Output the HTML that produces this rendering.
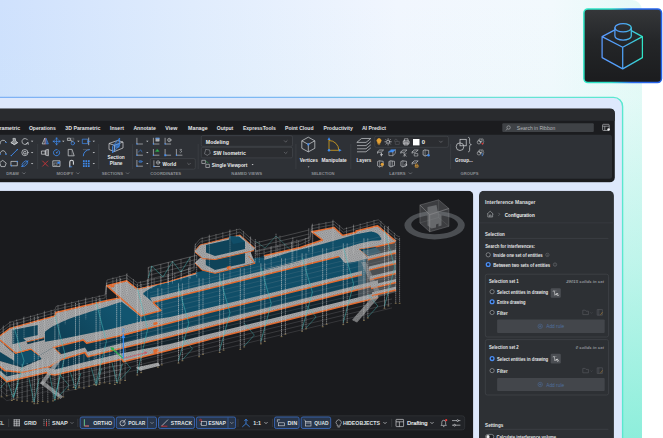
<!DOCTYPE html>
<html lang="en"><head><meta charset="utf-8"><title>Interference Manager</title>
<style>html,body{margin:0;padding:0;background:#ffffff;}body{width:663px;height:438px;overflow:hidden;}svg{display:block;}text{font-family:"Liberation Sans", sans-serif;}</style>
</head><body>
<svg width="663" height="438" viewBox="0 0 663 438" font-family='"Liberation Sans", sans-serif'>
<defs>
<linearGradient id="bgA" x1="0" y1="0" x2="1" y2="0">
 <stop offset="0" stop-color="#cfe1fd"/><stop offset="0.3" stop-color="#e0ecfd"/><stop offset="0.62" stop-color="#f1f6fe"/><stop offset="0.86" stop-color="#f2f9fd"/><stop offset="1" stop-color="#e5faf7"/>
</linearGradient>
<linearGradient id="bgB" x1="0" y1="0" x2="0" y2="1">
 <stop offset="0" stop-color="#84edd8" stop-opacity="0"/><stop offset="0.22" stop-color="#84edd8" stop-opacity="0.03"/><stop offset="0.6" stop-color="#84edd8" stop-opacity="0.4"/><stop offset="1" stop-color="#84edd8" stop-opacity="0.9"/>
</linearGradient>
<linearGradient id="frameB" x1="0" y1="0" x2="1" y2="0">
 <stop offset="0" stop-color="#7fb1f5"/><stop offset="0.5" stop-color="#7dbaf2"/><stop offset="0.8" stop-color="#6ae2d6"/><stop offset="1" stop-color="#5ae8cf"/>
</linearGradient>
<linearGradient id="icoB" x1="0" y1="0" x2="1" y2="0">
 <stop offset="0" stop-color="#2de6c6"/><stop offset="0.35" stop-color="#2de0c8"/><stop offset="0.62" stop-color="#2a6cf0"/><stop offset="1" stop-color="#2563eb"/>
</linearGradient>
<linearGradient id="icoF" x1="0" y1="0" x2="0" y2="1">
 <stop offset="0" stop-color="#35373a"/><stop offset="0.45" stop-color="#242628"/><stop offset="1" stop-color="#1b1c1e"/>
</linearGradient>
<linearGradient id="icoS" gradientUnits="userSpaceOnUse" x1="602" y1="0" x2="643" y2="0">
 <stop offset="0" stop-color="#5a9bff"/><stop offset="0.5" stop-color="#4fa2f8"/><stop offset="1" stop-color="#2fe6c4"/>
</linearGradient>
</defs>
<path d="M0 0 H632 A10 10 0 0 1 642 10 V438 H0 Z" fill="url(#bgA)"/>
<path d="M0 0 H632 A10 10 0 0 1 642 10 V438 H0 Z" fill="url(#bgB)"/>
<rect x="-20" y="97.4" width="642.6" height="400" rx="9" fill="#dde8fc" stroke="url(#frameB)" stroke-width="1.4"/>
<rect x="583.9" y="8.9" width="77.6" height="73.7" rx="4" fill="url(#icoF)" stroke="url(#icoB)" stroke-width="1.5"/>
<g fill="none" stroke="url(#icoS)" stroke-width="1.25" stroke-linejoin="round" stroke-linecap="round">
<path d="M602.1 36.6 L622.7 47.3 L642.4 36.6 M622.7 47.3 V68.9 M602.1 36.6 V57.6 L622.7 68.9 L642.4 57.6 V36.6 M602.1 36.6 L614.9 29.9 M642.4 36.6 L631.3 30.6"/>
<ellipse cx="623.1" cy="27.8" rx="8.2" ry="4.1"/>
<path d="M614.9 27.8 V36 A8.2 4.1 0 0 0 631.3 36 V27.8"/>
</g>
<clipPath id="cRib"><rect x="-20" y="108.4" width="634.8" height="74" rx="5"/></clipPath>
<g clip-path="url(#cRib)">
<rect x="-20.00" y="108.40" width="640.00" height="74.00" rx="0" fill="#1b1c1f" />
<rect x="-20.00" y="108.40" width="640.00" height="12.40" rx="0" fill="#292b2e" />
<rect x="-20.00" y="134.70" width="632.00" height="44.00" rx="2.5" fill="#2e3136" />
</g>
<text x="-6.90" y="129.53" font-size="5.3" font-weight="bold" fill="#e2e3e5"  textLength="27.00" lengthAdjust="spacingAndGlyphs" >Parametric</text>
<text x="28.90" y="129.53" font-size="5.3" font-weight="bold" fill="#e2e3e5"  textLength="26.90" lengthAdjust="spacingAndGlyphs" >Operations</text>
<text x="65.30" y="129.53" font-size="5.3" font-weight="bold" fill="#e2e3e5"  textLength="35.20" lengthAdjust="spacingAndGlyphs" >3D Parametric</text>
<text x="110.00" y="129.53" font-size="5.3" font-weight="bold" fill="#e2e3e5"  textLength="13.90" lengthAdjust="spacingAndGlyphs" >Insert</text>
<text x="133.40" y="129.53" font-size="5.3" font-weight="bold" fill="#e2e3e5"  textLength="22.40" lengthAdjust="spacingAndGlyphs" >Annotate</text>
<text x="165.30" y="129.53" font-size="5.3" font-weight="bold" fill="#e2e3e5"  textLength="12.00" lengthAdjust="spacingAndGlyphs" >View</text>
<text x="188.10" y="129.53" font-size="5.3" font-weight="bold" fill="#e2e3e5"  textLength="19.60" lengthAdjust="spacingAndGlyphs" >Manage</text>
<text x="216.80" y="129.53" font-size="5.3" font-weight="bold" fill="#e2e3e5"  textLength="16.50" lengthAdjust="spacingAndGlyphs" >Output</text>
<text x="242.90" y="129.53" font-size="5.3" font-weight="bold" fill="#e2e3e5"  textLength="32.90" lengthAdjust="spacingAndGlyphs" >ExpressTools</text>
<text x="285.10" y="129.53" font-size="5.3" font-weight="bold" fill="#e2e3e5"  textLength="28.40" lengthAdjust="spacingAndGlyphs" >Point Cloud</text>
<text x="323.50" y="129.53" font-size="5.3" font-weight="bold" fill="#e2e3e5"  textLength="29.40" lengthAdjust="spacingAndGlyphs" >Productivity</text>
<text x="361.90" y="129.53" font-size="5.3" font-weight="bold" fill="#e2e3e5"  textLength="24.10" lengthAdjust="spacingAndGlyphs" >AI Predict</text>
<rect x="502.30" y="123.30" width="91.50" height="8.80" rx="1" fill="#3f4246" />
<circle cx="508.6" cy="127.5" r="1.7" fill="none" stroke="#b4b7bb" stroke-width="0.6"/>
<line x1="507.40" y1="128.80" x2="506.00" y2="130.40" stroke="#b4b7bb" stroke-width="0.6" />
<text x="516.80" y="129.76" font-size="4.9" font-weight="normal" fill="#b3b6ba"  textLength="38.50" lengthAdjust="spacingAndGlyphs" >Search in Ribbon</text>
<g fill="none" stroke="#c9cbce" stroke-width="0.6"><rect x="602.6" y="124.3" width="6.6" height="6.2" rx="0.8"/><path d="M602.6 126.2 H609.2 M604.8 126.2 V130.5"/></g>
<circle cx="608.6" cy="129.5" r="1.3" fill="#e8e9ea"/>
<text x="6.30" y="175.12" font-size="3.9" font-weight="bold" fill="#8b8e93"  textLength="12.50" lengthAdjust="spacingAndGlyphs" >DRAW</text>
<path d="M22.60 172.75 L23.90 174.05 L25.20 172.75" fill="none" stroke="#8b8e93" stroke-width="0.6" stroke-linecap="round" stroke-linejoin="round"/>
<text x="56.50" y="175.12" font-size="3.9" font-weight="bold" fill="#8b8e93"  textLength="16.90" lengthAdjust="spacingAndGlyphs" >MODIFY</text>
<path d="M76.60 172.75 L77.90 174.05 L79.20 172.75" fill="none" stroke="#8b8e93" stroke-width="0.6" stroke-linecap="round" stroke-linejoin="round"/>
<text x="101.80" y="175.12" font-size="3.9" font-weight="bold" fill="#8b8e93"  textLength="21.30" lengthAdjust="spacingAndGlyphs" >SECTIONS</text>
<path d="M126.30 172.75 L127.60 174.05 L128.90 172.75" fill="none" stroke="#8b8e93" stroke-width="0.6" stroke-linecap="round" stroke-linejoin="round"/>
<text x="150.30" y="175.12" font-size="3.9" font-weight="bold" fill="#8b8e93"  textLength="30.80" lengthAdjust="spacingAndGlyphs" >COORDINATES</text>
<text x="231.30" y="175.12" font-size="3.9" font-weight="bold" fill="#8b8e93"  textLength="30.90" lengthAdjust="spacingAndGlyphs" >NAMED VIEWS</text>
<text x="311.20" y="175.12" font-size="3.9" font-weight="bold" fill="#8b8e93"  textLength="23.30" lengthAdjust="spacingAndGlyphs" >SELECTION</text>
<text x="389.30" y="175.12" font-size="3.9" font-weight="bold" fill="#8b8e93"  textLength="16.30" lengthAdjust="spacingAndGlyphs" >LAYERS</text>
<path d="M409.10 172.75 L410.40 174.05 L411.70 172.75" fill="none" stroke="#8b8e93" stroke-width="0.6" stroke-linecap="round" stroke-linejoin="round"/>
<text x="460.60" y="175.12" font-size="3.9" font-weight="bold" fill="#8b8e93"  textLength="17.90" lengthAdjust="spacingAndGlyphs" >GROUPS</text>
<line x1="37.70" y1="144.00" x2="37.70" y2="169.00" stroke="#41444a" stroke-width="0.6" />
<line x1="98.70" y1="144.00" x2="98.70" y2="169.00" stroke="#41444a" stroke-width="0.6" />
<line x1="132.40" y1="144.00" x2="132.40" y2="169.00" stroke="#41444a" stroke-width="0.6" />
<line x1="198.20" y1="144.00" x2="198.20" y2="169.00" stroke="#41444a" stroke-width="0.6" />
<line x1="295.90" y1="144.00" x2="295.90" y2="169.00" stroke="#41444a" stroke-width="0.6" />
<line x1="350.80" y1="144.00" x2="350.80" y2="169.00" stroke="#41444a" stroke-width="0.6" />
<line x1="450.60" y1="144.00" x2="450.60" y2="169.00" stroke="#41444a" stroke-width="0.6" />
<g transform="translate(3.00 141.40)" fill="none" stroke="#d6d8db" stroke-width="0.7" stroke-linecap="round" stroke-linejoin="round"><path d="M-3 2.5 A3.2 3.2 0 0 1 3 0.5"/><circle cx="3" cy="1" r="0.7" fill="#3f8cf0" stroke="none"/></g>
<g transform="translate(14.30 141.40)" fill="none" stroke="#d6d8db" stroke-width="0.7" stroke-linecap="round" stroke-linejoin="round"><path d="M-1 -3 L1 -3 L1.3 -0.5 L3.3 1.2 L0 3.2 L-3.3 1.2 L-1.3 -0.5 Z" fill="#d6d8db" fill-opacity="0.55"/><path d="M-3.3 1.2 L0 3.2 L3.3 1.2"/></g>
<g transform="translate(24.90 141.40)" fill="none" stroke="#d6d8db" stroke-width="0.7" stroke-linecap="round" stroke-linejoin="round"><path d="M2.6 -1.6 A3 3 0 1 0 2.9 1.2"/><path d="M1.2 2.6 L3.2 1.0 L3.4 3" stroke="#d6d8db"/></g>
<polygon points="30.9,140.8 33.3,140.8 32.1,142.1" fill="#c8cacd" stroke="none" stroke-width="1" />
<g transform="translate(3.00 152.60)" fill="none" stroke="#d6d8db" stroke-width="0.7" stroke-linecap="round" stroke-linejoin="round"><path d="M-3 1 C-2 -3 2 -3 3 1"/><circle cx="-3" cy="1.6" r="0.8" fill="#3f8cf0" stroke="none"/><circle cx="3" cy="1.6" r="0.8" fill="#3f8cf0" stroke="none"/></g>
<g transform="translate(14.30 152.60)" fill="none" stroke="#d6d8db" stroke-width="0.7" stroke-linecap="round" stroke-linejoin="round"><path d="M-3 3 L3 -3" stroke="#3f8cf0" stroke-width="0.9"/><circle cx="-3" cy="3" r="0.7" fill="#3f8cf0" stroke="none"/><circle cx="3" cy="-3" r="0.7" fill="#3f8cf0" stroke="none"/></g>
<g transform="translate(24.90 152.60)" fill="none" stroke="#d6d8db" stroke-width="0.7" stroke-linecap="round" stroke-linejoin="round"><circle r="3.1"/><path d="M1.2 -0.8 A1.5 1.5 0 1 0 1.4 0.6 H0"/></g>
<polygon points="30.9,152.0 33.3,152.0 32.1,153.3" fill="#c8cacd" stroke="none" stroke-width="1" />
<g transform="translate(3.00 163.60)" fill="none" stroke="#d6d8db" stroke-width="0.7" stroke-linecap="round" stroke-linejoin="round"><path d="M0 -3 L3.2 -0.6 L2 3 L-2 3 L-3.2 -0.6 Z"/></g>
<g transform="translate(14.30 163.60)" fill="none" stroke="#d6d8db" stroke-width="0.7" stroke-linecap="round" stroke-linejoin="round"><rect x="-3" y="-2.2" width="6" height="4.4"/><circle cx="3" cy="-2.2" r="0.7" fill="#3f8cf0" stroke="none"/><circle cx="-3" cy="2.2" r="0.7" fill="#3f8cf0" stroke="none"/></g>
<g transform="translate(24.90 163.60)" fill="none" stroke="#d6d8db" stroke-width="0.7" stroke-linecap="round" stroke-linejoin="round"><ellipse rx="3.4" ry="2" transform="rotate(-45)" stroke="#3f8cf0"/><path d="M-3 3 L3 -3" stroke="#3f8cf0"/><circle cx="-2.8" cy="2.8" r="0.7" fill="#3f8cf0" stroke="none"/></g>
<polygon points="30.9,163.0 33.3,163.0 32.1,164.3" fill="#c8cacd" stroke="none" stroke-width="1" />
<g transform="translate(45.20 141.40)" fill="none" stroke="#d6d8db" stroke-width="0.7" stroke-linecap="round" stroke-linejoin="round"><path d="M-0.5 -3 L-3 2.5 L-0.5 2.5 Z" stroke="#d6d8db"/><path d="M0.8 -3 L3.2 2.5 L0.8 2.5 Z" stroke="#3f8cf0" fill="#3f8cf0" fill-opacity="0.4"/><path d="M0.2 -3.6 V3.4" stroke="#d05050" stroke-width="0.4"/></g>
<g transform="translate(56.60 141.40)" fill="none" stroke="#d6d8db" stroke-width="0.7" stroke-linecap="round" stroke-linejoin="round"><path d="M-3.4 0 H3.4 M0 -3.4 V3.4 M-3.4 0 L-2.2 -1 M-3.4 0 L-2.2 1 M3.4 0 L2.2 -1 M3.4 0 L2.2 1 M0 -3.4 L-1 -2.2 M0 -3.4 L1 -2.2 M0 3.4 L-1 2.2 M0 3.4 L1 2.2" stroke="#3f8cf0"/></g>
<polygon points="62.1,140.8 64.5,140.8 63.3,142.1" fill="#c8cacd" stroke="none" stroke-width="1" />
<g transform="translate(71.20 141.40)" fill="none" stroke="#d6d8db" stroke-width="0.7" stroke-linecap="round" stroke-linejoin="round"><rect x="-3.4" y="-3.2" width="2.6" height="2.2" /><circle cx="1.6" cy="1.8" r="1.7" stroke="#3f8cf0"/><path d="M-0.4 -1.2 L1 0.4" stroke="#d6d8db"/><rect x="0" y="-3.2" width="2.6" height="2" stroke="#8f9297" stroke-width="0.4"/></g>
<polygon points="77.2,140.8 79.6,140.8 78.4,142.1" fill="#c8cacd" stroke="none" stroke-width="1" />
<g transform="translate(86.30 141.40)" fill="none" stroke="#d6d8db" stroke-width="0.7" stroke-linecap="round" stroke-linejoin="round"><rect x="-3.6" y="-2.2" width="5" height="4.4" stroke="#3f8cf0"/><path d="M2.4 -3.4 V3.4"/><path d="M1.4 0 H3.8" stroke="#3f8cf0"/></g>
<polygon points="92.6,140.8 95.0,140.8 93.8,142.1" fill="#c8cacd" stroke="none" stroke-width="1" />
<g transform="translate(45.20 152.60)" fill="none" stroke="#d6d8db" stroke-width="0.7" stroke-linecap="round" stroke-linejoin="round"><rect x="-3.4" y="-1.6" width="3.4" height="3.2"/><path d="M0.6 -2.6 L3.2 -3.2 V3.2 L0.6 2.6 Z" fill="#d6d8db" fill-opacity="0.35"/></g>
<g transform="translate(56.60 152.60)" fill="none" stroke="#d6d8db" stroke-width="0.7" stroke-linecap="round" stroke-linejoin="round"><path d="M2.9 -1 A3.1 3.1 0 1 1 0.5 -3" stroke="#3f8cf0" stroke-width="0.85"/><path d="M0.4 -0.2 L2.2 -2.2" stroke="#3f8cf0"/><circle cx="0.2" cy="0.2" r="0.8" fill="#3f8cf0" stroke="none"/></g>
<g transform="translate(71.20 152.60)" fill="none" stroke="#d6d8db" stroke-width="0.7" stroke-linecap="round" stroke-linejoin="round"><path d="M-2.6 -3.2 H0.8 L3 3.2 H-2.6 Z"/><path d="M0.8 -3.2 V3.2" stroke="#8f9297" stroke-width="0.5"/></g>
<g transform="translate(86.30 152.60)" fill="none" stroke="#d6d8db" stroke-width="0.7" stroke-linecap="round" stroke-linejoin="round"><path d="M-3 3.2 A6.2 6.2 0 0 1 3.2 -3" stroke="#3f8cf0" stroke-width="0.9"/><path d="M-3 -3 H3.2" stroke="#8f9297" stroke-width="0.4" stroke-dasharray="0.8 0.8"/></g>
<polygon points="92.6,152.0 95.0,152.0 93.8,153.3" fill="#c8cacd" stroke="none" stroke-width="1" />
<g transform="translate(45.20 163.60)" fill="none" stroke="#d6d8db" stroke-width="0.7" stroke-linecap="round" stroke-linejoin="round"><path d="M-2.6 -2.6 L2.6 2.6 M2.6 -2.6 L-2.6 2.6" stroke="#d8353a" stroke-width="0.8"/></g>
<g transform="translate(56.60 163.60)" fill="none" stroke="#d6d8db" stroke-width="0.7" stroke-linecap="round" stroke-linejoin="round"><rect x="-3.4" y="-2.8" width="6.8" height="5.6"/><rect x="-2.2" y="-0.6" width="2.6" height="2.4" stroke="#8f9297"/><rect x="1.4" y="-1.6" width="1.6" height="1.4" stroke="#3f8cf0" fill="#3f8cf0"/></g>
<g transform="translate(71.20 163.60)" fill="none" stroke="#d6d8db" stroke-width="0.7" stroke-linecap="round" stroke-linejoin="round"><path d="M-1.4 3.2 V-1.6 A1.8 1.8 0 0 1 2.2 -1.6 V0.6" stroke-width="1.1"/><path d="M-1.4 3.2 H0.6" stroke="#3f8cf0"/></g>
<g transform="translate(86.30 163.60)" fill="none" stroke="#d6d8db" stroke-width="0.7" stroke-linecap="round" stroke-linejoin="round"><rect x="-3.35" y="-3.35" width="1.7" height="1.7" fill="#3f8cf0" stroke="none"/><rect x="-3.35" y="-0.85" width="1.7" height="1.7" fill="#3f8cf0" stroke="none"/><rect x="-3.35" y="1.65" width="1.7" height="1.7" fill="#3f8cf0" stroke="none"/><rect x="-0.85" y="-3.35" width="1.7" height="1.7" fill="#3f8cf0" stroke="none"/><rect x="-0.85" y="-0.85" width="1.7" height="1.7" fill="#3f8cf0" stroke="none"/><rect x="-0.85" y="1.65" width="1.7" height="1.7" fill="#3f8cf0" stroke="none"/><rect x="1.65" y="-3.35" width="1.7" height="1.7" fill="#3f8cf0" stroke="none"/><rect x="1.65" y="-0.85" width="1.7" height="1.7" fill="#3f8cf0" stroke="none"/><rect x="1.65" y="1.65" width="1.7" height="1.7" fill="#3f8cf0" stroke="none"/></g>
<polygon points="92.6,163.0 95.0,163.0 93.8,164.3" fill="#c8cacd" stroke="none" stroke-width="1" />
<g fill="none" stroke-linejoin="round" stroke-width="0.7"><path d="M109 143.5 L117.5 140.5 L123 142 L123 148 L114.5 151.5 L109 149.5 Z M109 143.5 L114.5 145.3 L123 142 M114.5 145.3 V151.5" stroke="#d6d8db"/><path d="M112.5 146.5 L119.6 138 V145.5 L112.5 153 Z" stroke="#3f8cf0" fill="#3f8cf0" fill-opacity="0.25" stroke-width="0.8"/><rect x="115.6" y="144.3" width="3.6" height="3" fill="#3f8cf0" fill-opacity="0.55" stroke="#3f8cf0" stroke-width="0.5"/></g>
<text x="107.50" y="159.39" font-size="5.2" font-weight="bold" fill="#e8e9eb"  textLength="17.30" lengthAdjust="spacingAndGlyphs" >Section</text>
<text x="109.80" y="164.79" font-size="5.2" font-weight="bold" fill="#e8e9eb"  textLength="12.60" lengthAdjust="spacingAndGlyphs" >Plane</text>
<g transform="translate(139.50 141.40)" fill="none" stroke="#d6d8db" stroke-width="0.6" stroke-linecap="round" stroke-linejoin="round"><path d="M-2.6 -3.2 V2.6 H3"/><circle cx="-2.6" cy="2.6" r="0.7" fill="#3f8cf0" stroke="none"/></g>
<polygon points="146.1,140.8 148.5,140.8 147.3,142.1" fill="#c8cacd" stroke="none" stroke-width="1" />
<g transform="translate(156.00 141.40)" fill="none" stroke="#d6d8db" stroke-width="0.6" stroke-linecap="round" stroke-linejoin="round"><path d="M-2.6 -3.2 V2.6 H3"/><circle cx="-2.6" cy="2.6" r="0.7" fill="#3f8cf0" stroke="none"/><rect x="0" y="-3.2" width="3.2" height="3" fill="#d6d8db" fill-opacity="0.7" stroke-width="0.4"/><path d="M0 -3.2 H3.2" stroke="#3f8cf0" stroke-width="0.8"/></g>
<g transform="translate(167.70 141.40)" fill="none" stroke="#d6d8db" stroke-width="0.6" stroke-linecap="round" stroke-linejoin="round"><path d="M-2.6 -3.2 V2.6 H3"/><circle cx="-2.6" cy="2.6" r="0.7" fill="#3f8cf0" stroke="none"/><circle cx="1.6" cy="-1.4" r="1.7" stroke-width="0.5"/><path d="M0 -1.4 H3.2 M1.6 -3 V0.2" stroke-width="0.3"/></g>
<g transform="translate(139.50 152.60)" fill="none" stroke="#d6d8db" stroke-width="0.6" stroke-linecap="round" stroke-linejoin="round"><path d="M-2.6 -3.2 V2.6 H3"/><circle cx="-2.6" cy="2.6" r="0.7" fill="#3f8cf0" stroke="none"/><path d="M-1.4 -0.4 L1.4 -2.8 L2.4 -0.6" stroke="#3f8cf0" stroke-width="0.5"/></g>
<polygon points="146.1,152.0 148.5,152.0 147.3,153.3" fill="#c8cacd" stroke="none" stroke-width="1" />
<g transform="translate(156.00 152.60)" fill="none" stroke="#d6d8db" stroke-width="0.6" stroke-linecap="round" stroke-linejoin="round"><path d="M-2.6 -3.2 V2.6 H3"/><circle cx="-2.6" cy="2.6" r="0.7" fill="#3f8cf0" stroke="none"/><path d="M-0.6 -1 L3.2 -1 L1.4 -3.4 Z" fill="#2db84d" stroke="#2db84d" stroke-width="0.3"/></g>
<g transform="translate(167.70 152.60)" fill="none" stroke="#d6d8db" stroke-width="0.6" stroke-linecap="round" stroke-linejoin="round"><path d="M-2.6 -3.2 V2.6 H3"/><rect x="-3.4" y="1.8" width="2" height="1.8" fill="#3f8cf0" stroke="none"/></g>
<g transform="translate(179.00 152.60)" fill="none" stroke="#d6d8db" stroke-width="0.6" stroke-linecap="round" stroke-linejoin="round"><path d="M-2.6 -3.2 V2.6 H3"/><circle cx="-2.6" cy="2.6" r="0.7" fill="#3f8cf0" stroke="none"/><path d="M1 -3.2 H2.6 L1.6 -2 A1 1 0 1 1 0.8 -0.4" stroke-width="0.45"/></g>
<g transform="translate(139.50 163.60)" fill="none" stroke="#d6d8db" stroke-width="0.6" stroke-linecap="round" stroke-linejoin="round"><path d="M-2.6 -3.2 V2.6 H3"/><circle cx="-2.6" cy="2.6" r="0.7" fill="#3f8cf0" stroke="none"/><ellipse cx="1" cy="-2" rx="1.8" ry="1" stroke="#3f8cf0" fill="#3f8cf0" fill-opacity="0.5" stroke-width="0.4"/></g>
<polygon points="146.1,163.0 148.5,163.0 147.3,164.3" fill="#c8cacd" stroke="none" stroke-width="1" />
<rect x="150.30" y="158.60" width="45.00" height="10.60" rx="1.5" fill="#2b2d31" stroke="#484b50" stroke-width="0.6"/>
<g transform="translate(156.50 163.90)" fill="none" stroke="#d6d8db" stroke-width="0.6" stroke-linecap="round" stroke-linejoin="round"><path d="M-2.6 -3.2 V2.6 H3"/><circle cx="-2.6" cy="2.6" r="0.7" fill="#3f8cf0" stroke="none"/><circle cx="1.6" cy="-1.4" r="1.7" stroke-width="0.5"/><path d="M0 -1.4 H3.2 M1.6 -3 V0.2" stroke-width="0.3"/></g>
<text x="162.60" y="166.29" font-size="5.2" font-weight="bold" fill="#ecedee"  textLength="13.50" lengthAdjust="spacingAndGlyphs" >World</text>
<path d="M187.60 163.30 L189.00 164.70 L190.40 163.30" fill="none" stroke="#7d8085" stroke-width="0.6" stroke-linecap="round" stroke-linejoin="round"/>
<rect x="201.30" y="135.70" width="91.20" height="10.60" rx="1.5" fill="#2b2d31" stroke="#484b50" stroke-width="0.6"/>
<text x="205.80" y="143.93" font-size="5.3" font-weight="bold" fill="#ecedee"  textLength="23.10" lengthAdjust="spacingAndGlyphs" >Modeling</text>
<path d="M284.30 140.70 L285.70 142.10 L287.10 140.70" fill="none" stroke="#7d8085" stroke-width="0.6" stroke-linecap="round" stroke-linejoin="round"/>
<rect x="201.30" y="147.30" width="91.20" height="10.60" rx="1.5" fill="#2b2d31" stroke="#484b50" stroke-width="0.6"/>
<g transform="translate(207.30 152.40)" fill="none" stroke="#d6d8db" stroke-width="0.6" stroke-linecap="round" stroke-linejoin="round"><path d="M-1.5 -3 L2.2 -2.4 L3 1 L0 3 L-2.8 1.4 Z" stroke="#8f9297" stroke-dasharray="1.2 0.7"/></g>
<text x="213.30" y="155.23" font-size="5.3" font-weight="bold" fill="#ecedee"  textLength="32.50" lengthAdjust="spacingAndGlyphs" >SW Isometric</text>
<path d="M284.30 152.20 L285.70 153.60 L287.10 152.20" fill="none" stroke="#7d8085" stroke-width="0.6" stroke-linecap="round" stroke-linejoin="round"/>
<g transform="translate(205.80 163.90)" fill="none" stroke="#d6d8db" stroke-width="0.55" stroke-linecap="round" stroke-linejoin="round"><rect x="-3.6" y="-3.6" width="3.2" height="3.2"/><rect x="0.4" y="0.4" width="3.2" height="3.2"/><path d="M0.2 -2.6 L2.4 -1 " stroke="#2db84d"/></g>
<text x="211.80" y="166.69" font-size="5.2" font-weight="bold" fill="#ecedee"  textLength="35.50" lengthAdjust="spacingAndGlyphs" >Single Viewport</text>
<polygon points="251.6,164.1 253.6,164.1 252.6,165.2" fill="#c8cacd" stroke="none" stroke-width="1" />
<g fill="none" stroke="#d6d8db" stroke-width="0.7" stroke-linejoin="round"><path d="M308.3 137.2 L314.8 140.8 V148.3 L308.3 151.9 L301.8 148.3 V140.8 Z M301.8 140.8 L308.3 144.4 L314.8 140.8 M308.3 144.4 V151.9"/></g>
<circle cx="308.3" cy="144.4" r="1.1" fill="#3f8cf0"/>
<text x="299.70" y="162.09" font-size="5.2" font-weight="bold" fill="#e8e9eb"  textLength="18.10" lengthAdjust="spacingAndGlyphs" >Vertices</text>
<polygon points="307.7,166.6 309.5,166.6 308.6,167.5" fill="#c8cacd" stroke="none" stroke-width="1" />
<g fill="none" stroke="#d9a520" stroke-width="0.8"><path d="M329 140 V150.3 H339"/><path d="M329 140.5 A9.8 9.8 0 0 1 338.8 150.3"/></g>
<circle cx="329" cy="150.3" r="1.2" fill="#3f8cf0"/>
<polygon points="329.0,137.3 330.5,140.0 327.5,140.0" fill="#3f8cf0" stroke="none" stroke-width="1" />
<polygon points="341.6,150.3 338.8,148.8 338.8,151.8" fill="#3f8cf0" stroke="none" stroke-width="1" />
<text x="321.50" y="162.09" font-size="5.2" font-weight="bold" fill="#e8e9eb"  textLength="25.30" lengthAdjust="spacingAndGlyphs" >Manipulate</text>
<g fill="none" stroke="#d6d8db" stroke-width="0.65" stroke-linejoin="round"><path d="M361.5 138.5 H370.8 L366 142.4 H356.8 Z"/><path d="M357 145.6 H366 L370.8 141.6"/><path d="M357 148.8 H366 L370.8 144.8"/><path d="M357 151.8 H366 L370.8 147.9"/></g>
<text x="356.60" y="162.09" font-size="5.2" font-weight="bold" fill="#e8e9eb"  textLength="14.60" lengthAdjust="spacingAndGlyphs" >Layers</text>
<rect x="374.80" y="136.30" width="73.60" height="11.00" rx="1.5" fill="#2b2d31" stroke="#484b50" stroke-width="0.6"/>
<g transform="translate(379.00 141.60)" fill="none" stroke="#d6d8db" stroke-width="0.5" stroke-linecap="round" stroke-linejoin="round"><path d="M-1.6 0.6 A2.2 2.2 0 1 1 1.6 0.6 L1 2 H-1 Z" fill="#e3a034" stroke="#e3a034"/><path d="M-0.8 3 H0.8" stroke="#e3a034"/></g>
<g transform="translate(388.10 141.80)" fill="none" stroke="#d6d8db" stroke-width="0.6" stroke-linecap="round" stroke-linejoin="round"><circle r="1.5"/><path d="M2.20 0.00 L3.20 0.00"/><path d="M1.56 1.56 L2.26 2.26"/><path d="M0.00 2.20 L0.00 3.20"/><path d="M-1.56 1.56 L-2.26 2.26"/><path d="M-2.20 0.00 L-3.20 0.00"/><path d="M-1.56 -1.56 L-2.26 -2.26"/><path d="M-0.00 -2.20 L-0.00 -3.20"/><path d="M1.56 -1.56 L2.26 -2.26"/></g>
<g transform="translate(397.10 142.00)" fill="none" stroke="#d6d8db" stroke-width="0.55" stroke-linecap="round" stroke-linejoin="round"><rect x="-1.4" y="-0.6" width="3.6" height="3" stroke="#5b5e63"/><path d="M-2.4 -0.6 V-1.6 A1.2 1.2 0 0 1 0 -1.6 V-0.6" stroke="#5b5e63"/></g>
<g transform="translate(406.20 141.80)" fill="none" stroke="#d6d8db" stroke-width="0.6" stroke-linecap="round" stroke-linejoin="round"><rect x="-3" y="-1" width="6" height="3.2" rx="0.8" fill="#d6d8db" fill-opacity="0.35"/><path d="M-1.8 -1 V-3 H1.8 V-1 M-1.8 1 H1.8 V3.2 H-1.8 Z" /></g>
<rect x="413.00" y="139.00" width="6.50" height="6.40" rx="0" fill="#ffffff" />
<text x="421.70" y="144.28" font-size="5.4" font-weight="bold" fill="#ecedee"  textLength="3.30" lengthAdjust="spacingAndGlyphs" >0</text>
<path d="M439.50 141.10 L440.90 142.50 L442.30 141.10" fill="none" stroke="#7d8085" stroke-width="0.6" stroke-linecap="round" stroke-linejoin="round"/>
<g transform="translate(380.60 153.00)" fill="none" stroke="#d6d8db" stroke-width="0.6" stroke-linecap="round" stroke-linejoin="round"><path d="M-0.6 -3 H3 L0.6 -0.8 H-3 Z"/><path d="M-3 -0.8 V0.6" stroke-width="0.4"/><path d="M0.8 0 V3" /><circle cx="0.8" cy="1.6" r="0.9" fill="#d6d8db" fill-opacity="0.5" stroke-width="0.4"/></g>
<g transform="translate(391.90 153.00)" fill="none" stroke="#d6d8db" stroke-width="0.6" stroke-linecap="round" stroke-linejoin="round"><path d="M-0.6 -3.2 H3.4 L1 -1 H-3 Z" fill="#3f8cf0" stroke="#3f8cf0"/><path d="M-3 -1 V2.6 H1 V-1 M1 2.6 L3.4 0.4 V-3.2" stroke-width="0.5"/></g>
<g transform="translate(403.90 153.00)" fill="none" stroke="#d6d8db" stroke-width="0.6" stroke-linecap="round" stroke-linejoin="round"><path d="M-0.6 -3 H3 L0.6 -0.8 H-3 Z"/><path d="M-3 -0.8 V0.6" stroke-width="0.4"/><path d="M-0.8 0.4 L2.4 3.2 M2.4 0.4 L-0.8 3.2 M0.8 0 V3.4" stroke-width="0.45"/></g>
<g transform="translate(415.20 153.00)" fill="none" stroke="#d6d8db" stroke-width="0.6" stroke-linecap="round" stroke-linejoin="round"><path d="M-0.6 -3 H3 L0.6 -0.8 H-3 Z"/><path d="M-3 -0.8 V0.6" stroke-width="0.4"/><rect x="-0.6" y="0.6" width="3.2" height="2.4" stroke-width="0.5"/></g>
<g transform="translate(426.10 153.00)" fill="none" stroke="#d6d8db" stroke-width="0.6" stroke-linecap="round" stroke-linejoin="round"><path d="M-1 -3 L2.6 -2.6 V1.6 L-1 3 L-3 2 V-2 Z"/><path d="M-1 -3 V3" stroke-width="0.4"/><circle cx="2.4" cy="2.2" r="1.2" fill="#3f8cf0" stroke="none"/></g>
<g transform="translate(380.60 163.90)" fill="none" stroke="#d6d8db" stroke-width="0.6" stroke-linecap="round" stroke-linejoin="round"><path d="M-1 -3 L2.6 -2.6 V1.6 L-1 3 L-3 2 V-2 Z"/><path d="M-1 -3 V3" stroke-width="0.4"/><circle cx="1.6" cy="0.4" r="1.5" fill="#e3a034" stroke="none"/><path d="M1.6 2 V3" stroke="#e3a034"/></g>
<g transform="translate(391.90 163.90)" fill="none" stroke="#d6d8db" stroke-width="0.6" stroke-linecap="round" stroke-linejoin="round"><path d="M-1 -3 L2.6 -2.6 V1.6 L-1 3 L-3 2 V-2 Z"/><path d="M-1 -3 V3" stroke-width="0.4"/><path d="M0.6 -2.6 V2.2 M-2 -2.2 V2.2" stroke-width="0.4"/></g>
<g transform="translate(403.90 163.90)" fill="none" stroke="#d6d8db" stroke-width="0.6" stroke-linecap="round" stroke-linejoin="round"><path d="M-1 -3 L2.6 -2.6 V1.6 L-1 3 L-3 2 V-2 Z"/><path d="M-1 -3 V3" stroke-width="0.4"/><path d="M0.4 1 H3 M1.6 -0.2 L3 1 L1.6 2.2" stroke-width="0.5"/></g>
<g transform="translate(415.20 163.90)" fill="none" stroke="#d6d8db" stroke-width="0.6" stroke-linecap="round" stroke-linejoin="round"><path d="M-0.6 -3 H3 L0.6 -0.8 H-3 Z"/><path d="M-3 -0.8 V0.6" stroke-width="0.4"/><rect x="0" y="1.2" width="3" height="2.2" rx="0.4" stroke="#e3a034" fill="#e3a034" fill-opacity="0.4"/><path d="M0.6 1.2 V0.6 A0.9 0.9 0 0 1 2.4 0.6 V1.2" stroke="#e3a034" stroke-width="0.4"/></g>
<g fill="none" stroke="#d6d8db" stroke-width="0.7"><circle cx="460" cy="146.7" r="3.8"/><rect x="460" y="139.3" width="6.2" height="6.5"/><path d="M468.2 137.3 C470 137.3 469.6 139.6 469.6 141.6 C469.6 143.6 470 144.5 471.3 144.6 C470 144.7 469.6 145.6 469.6 147.6 C469.6 149.6 470 151.9 468.2 151.9"/></g>
<text x="455.10" y="162.39" font-size="5.2" font-weight="bold" fill="#e8e9eb"  textLength="17.80" lengthAdjust="spacingAndGlyphs" >Group...</text>
<g transform="translate(480.00 141.60)" fill="none" stroke="#d6d8db" stroke-width="0.5" stroke-linecap="round" stroke-linejoin="round"><circle cx="-1" cy="0.6" r="1.8"/><rect x="-0.6" y="-2.6" width="2.6" height="2.6"/><path d="M2.8 -3.2 C3.6 -3.2 3.2 -0.4 3.8 0 C3.2 0.4 3.6 3 2.8 3" stroke-width="0.4"/><circle cx="2.4" cy="2" r="0.9" fill="#e02b2b" stroke="none"/></g>
<g transform="translate(480.00 152.60)" fill="none" stroke="#d6d8db" stroke-width="0.5" stroke-linecap="round" stroke-linejoin="round"><circle cx="-1" cy="0.6" r="1.8"/><rect x="-0.6" y="-2.6" width="2.6" height="2.6"/><path d="M2.8 -3.2 C3.6 -3.2 3.2 -0.4 3.8 0 C3.2 0.4 3.6 3 2.8 3" stroke-width="0.4"/><path d="M2.2 0.8 V3.2" stroke="#3f8cf0" stroke-width="0.7"/></g>
<clipPath id="cVp"><rect x="-20" y="190.7" width="493.3" height="300" rx="5"/></clipPath>
<g clip-path="url(#cVp)">
<rect x="-20.00" y="190.70" width="493.30" height="300.00" rx="0" fill="#1a1b1e" />
<defs><linearGradient id="sailG" gradientUnits="userSpaceOnUse" x1="110" y1="300" x2="70" y2="340"><stop offset="0" stop-color="#125570"/><stop offset="1" stop-color="#0f4258"/></linearGradient><pattern id="deckP" width="2" height="2" patternUnits="userSpaceOnUse" patternTransform="rotate(-14)">
<rect width="2" height="2" fill="#adaeaf"/><rect width="1" height="1" fill="#858688"/><rect x="1" y="1" width="1" height="1" fill="#98999b"/></pattern></defs>
<g stroke-linejoin="round">
<polygon points="0.0,336.0 10.0,328.3 55.0,315.8 55.8,312.5 108.0,300.3 121.0,297.6 137.5,289.2 170.0,281.5 196.0,272.5 215.0,273.3 255.0,263.3 256.0,258.0 264.2,255.8 300.0,247.5 322.5,240.0 343.3,235.3 378.3,225.8 396.7,241.7 397.0,291.0 378.0,295.8 300.0,315.8 210.0,339.2 123.3,360.8 110.0,362.5 55.0,375.0 46.7,372.5 6.7,381.7 0.0,375.8" fill="#0e3649" />
<polygon points="150.0,302.3 372.0,248.4 372.0,272.4 100.0,338.5 100.0,300.0" fill="#104e68" />
<polygon points="100.0,338.5 372.0,272.4 378.0,284.7 100.0,352.3" fill="#0f4359" />
<polygon points="121.7,348.3 170.0,336.7 378.0,284.7 378.0,297.6 170.0,350.0 121.7,359.0" fill="#14232b" />
<polygon points="366.0,244.0 397.0,241.0 398.0,292.0 378.0,297.0 366.0,299.0" fill="#1d2226" />
<polygon points="137.5,289.2 170.0,281.5 196.0,272.5 256.0,258.0 264.2,258.0 300.0,250.0 323.0,244.0 370.0,232.5 381.0,237.0 381.0,243.0 372.0,248.4 150.0,302.3" fill="#104e68" />
<polygon points="0.0,335.8 10.0,328.3 55.0,315.8 55.8,312.5 108.0,300.3 121.0,297.6 141.0,316.0 141.0,330.3 123.3,335.0 86.7,343.3 83.3,340.0 53.3,347.5 39.0,355.8 30.8,349.2 15.8,353.3 0.0,340.0" fill="url(#deckP)" />
<path d="M45 341.7 V331.7 C52 326 60 322.5 70 318.5 C85 313 100 309 121.7 301.7 L140.8 316.7 L140 321.7 L136.7 322.5 L110 329.2 L60 339.2 Z" fill="url(#sailG)"/>
<polygon points="12.5,330.0 37.8,325.0 37.8,338.0 12.5,344.2" fill="#0f4359" />
<polygon points="23.3,338.3 41.7,334.2 44.2,337.5 26.7,341.7" fill="url(#deckP)" />
<polygon points="26.7,341.7 44.2,337.5 44.2,340.0 27.5,344.2" fill="#0e3649" />
<polyline points="26.7,341.9 44.2,337.7" fill="none" stroke="#e26a2e" stroke-width="0.9" />
<polyline points="0.0,335.8 10.0,328.3 55.0,315.8 55.8,312.5 108.0,300.3 121.0,297.6" fill="none" stroke="#e26a2e" stroke-width="1.4" />
<polyline points="0.0,340.0 15.8,353.3 30.8,349.2 39.0,355.8" fill="none" stroke="#e26a2e" stroke-width="1.4" />
<polygon points="0.0,341.0 14.5,354.0 14.5,362.0 0.0,353.0" fill="url(#deckP)" />
<polygon points="0.0,352.0 14.5,361.0 14.5,354.5 31.0,350.3 41.7,358.0 21.7,366.0 12.0,364.5 0.0,360.5" fill="#0f4359" />
<polygon points="14.5,354.5 31.0,350.3 41.7,358.0 21.7,366.0 14.5,362.0" fill="#104e68" />
<polygon points="53.3,347.5 83.3,340.0 86.7,343.3 123.3,335.0 141.0,330.3 141.0,338.5 121.7,343.3 87.5,351.7 85.0,347.5 61.7,354.5" fill="#0e3649" />
<polyline points="60.5,354.5 53.3,347.5 83.3,340.0 86.7,343.3 123.3,335.0 141.0,330.3" fill="none" stroke="#e26a2e" stroke-width="1.55" />
<polygon points="39.0,355.8 53.3,347.5 60.0,354.5 85.0,347.5 87.5,351.7 121.7,343.3 121.7,348.3 87.5,356.7 85.0,352.5 60.0,360.0 50.0,366.7 23.0,372.5 5.0,370.8 0.0,366.7 0.0,361.0 12.0,364.5 21.7,367.5 41.7,359.0" fill="url(#deckP)" />
<polyline points="0.0,366.7 5.0,370.8 23.0,372.5 50.0,366.7 60.0,360.0 85.0,352.5 87.5,356.7 121.7,348.3" fill="none" stroke="#e26a2e" stroke-width="1.55" />
<polygon points="0.0,370.5 6.7,376.5 46.7,367.5 55.0,369.5 85.0,362.0 121.7,353.2 121.7,359.2 85.0,368.0 55.0,375.0 48.0,374.0 46.7,372.5 6.7,381.7 0.0,375.8" fill="url(#deckP)" />
<polyline points="0.0,375.8 6.7,381.7 46.7,372.5 48.0,374.0 55.0,375.0 85.0,368.0 121.7,359.2" fill="none" stroke="#e26a2e" stroke-width="1.55" />
<polygon points="60.5,354.0 64.0,356.0 43.5,385.0 40.0,383.2" fill="url(#deckP)" fill-opacity="0.75"/>
<polygon points="40.0,383.2 43.5,381.0 63.0,396.5 60.5,399.0" fill="url(#deckP)" fill-opacity="0.75"/>
<polygon points="121.7,353.2 170.0,344.0 210.0,333.7 378.0,292.6 378.0,297.6 210.0,339.2 170.0,350.0 123.3,361.7 121.7,359.2" fill="url(#deckP)" />
<polyline points="121.7,359.2 123.3,361.7 170.0,350.0 210.0,339.2 378.0,297.6" fill="none" stroke="#e26a2e" stroke-width="1.55" />
<polygon points="121.7,343.3 170.0,331.7 378.0,280.3 378.0,284.7 170.0,336.7 121.7,348.3" fill="url(#deckP)" />
<polyline points="121.7,348.3 170.0,336.7 378.0,284.7" fill="none" stroke="#e26a2e" stroke-width="1.55" />
<polygon points="123.3,326.0 141.0,321.5 170.0,317.0 210.0,307.5 362.0,270.8 362.0,274.8 210.0,312.3 170.0,323.0 140.0,330.5 123.3,335.0" fill="url(#deckP)" />
<polyline points="123.3,335.0 140.0,330.5 170.0,323.0 210.0,312.3 362.0,274.8" fill="none" stroke="#e26a2e" stroke-width="1.55" />
<polygon points="150.0,297.8 160.0,295.7 372.0,244.4 372.0,248.4 152.5,302.5" fill="url(#deckP)" />
<polyline points="152.5,302.5 372.0,248.4" fill="none" stroke="#e26a2e" stroke-width="1.55" />
<polygon points="106.7,285.8 126.7,280.8 137.5,289.2 153.0,302.5 161.0,310.5 141.0,316.0" fill="url(#deckP)" />
<polyline points="137.5,289.2 126.7,280.8 106.7,285.8 141.0,316.0 161.0,310.5 153.0,302.5" fill="none" stroke="#e26a2e" stroke-width="1.4" />
<polygon points="110.0,285.2 114.0,284.2 114.6,286.8 110.6,287.8" fill="#e26a2e" />
<polygon points="136.6,288.7 155.0,285.0 170.0,281.3 196.0,272.8 196.0,274.5 166.7,282.7 158.3,284.8 150.0,288.5 145.0,291.8 141.0,296.0" fill="url(#deckP)" />
<polyline points="137.5,289.2 167.5,282.0 196.0,273.0" fill="none" stroke="#e26a2e" stroke-width="1.0" />
<polygon points="153.3,322.7 157.5,321.7 157.8,324.3 153.6,325.3" fill="#e26a2e" />
<polygon points="153.3,349.8 158.3,348.6 158.6,352.0 153.6,353.2" fill="#e26a2e" />
<polygon points="135.8,367.5 158.3,362.5 160.0,365.8 140.0,370.8" fill="url(#deckP)" />
<polygon points="195.0,262.5 200.0,258.0 248.0,246.0 255.0,262.5 215.0,273.3 201.7,270.0" fill="url(#deckP)" />
<polygon points="205.8,253.3 245.0,244.0 245.0,263.3 215.0,270.0 205.8,265.0" fill="#0f4359" />
<polyline points="195.0,263.0 201.7,270.0 215.0,273.3 255.0,263.3 248.3,255.8" fill="none" stroke="#e26a2e" stroke-width="1.0" />
<polygon points="226.7,266.7 230.5,265.8 230.8,268.3 227.0,269.2" fill="#e26a2e" />
<polygon points="195.0,250.8 200.0,245.0 240.0,235.0 255.0,248.3 253.3,250.8 215.0,259.2 202.5,258.3 195.0,252.5" fill="url(#deckP)" />
<polyline points="195.0,250.8 200.0,245.0 240.0,235.0 255.0,248.3" fill="none" stroke="#e26a2e" stroke-width="0.9" />
<polyline points="195.0,252.0 202.5,258.6 215.0,259.6 254.0,250.6" fill="none" stroke="#e26a2e" stroke-width="1.0" />
<polygon points="206.0,245.0 229.0,239.7 229.0,236.0 239.0,236.7 245.0,241.7 245.0,249.0 215.0,256.0 206.0,252.5" fill="#0f4359" />
<polygon points="229.0,236.0 239.0,236.7 245.0,241.7 233.0,244.0" fill="#104e68" />
<polygon points="264.2,255.8 300.0,247.5 322.5,240.0 311.7,231.7 334.2,227.5 342.7,235.4 356.0,232.2 356.0,231.0 377.6,225.7 395.9,241.3 394.8,242.6 375.4,246.9 359.3,249.6 340.0,254.0 300.0,262.0 264.2,270.0" fill="url(#deckP)" />
<path d="M264.2 260 L290 252.3 L323.3 243.7 L340 239 L356 234.3 L371 231.6 Q378.5 232.5 381 238 Q382.5 240.5 378 240.6 L372 240.8 L359.3 243.5 L340 249.4 L290 263.3 L264.2 269.5 Z" fill="#104e68"/>
<polyline points="264.2,255.8 300.0,247.5 322.5,240.0 311.7,231.7 334.2,227.5 342.7,235.4 356.0,232.2 356.0,231.0 377.6,225.7 395.9,241.3" fill="none" stroke="#e26a2e" stroke-width="1.4" />
<polyline points="394.8,242.6 375.4,246.9 359.3,249.6" fill="none" stroke="#e26a2e" stroke-width="1.55" />
<polygon points="359.3,249.6 375.4,246.9 381.0,252.0 369.0,256.5" fill="#0f4359" />
<polyline points="356.0,260.0 368.0,257.0 359.3,249.6" fill="none" stroke="#e26a2e" stroke-width="1.0" />
<polygon points="358.0,252.0 396.0,243.0 396.0,292.0 378.0,297.0 358.0,302.0" fill="#97999b" fill-opacity="0.38"/>
<polygon points="368.0,256.2 396.0,249.4 396.0,253.0 368.0,259.8" fill="url(#deckP)" />
<polyline points="368.0,259.8 396.0,253.0" fill="none" stroke="#e26a2e" stroke-width="1.4" />
<polygon points="369.0,266.5 396.0,259.9 396.0,263.5 369.0,270.1" fill="url(#deckP)" />
<polyline points="369.0,270.1 396.0,263.5" fill="none" stroke="#e26a2e" stroke-width="1.4" />
<polygon points="370.0,276.2 396.0,269.9 396.0,273.5 370.0,279.8" fill="url(#deckP)" />
<polyline points="370.0,279.8 396.0,273.5" fill="none" stroke="#e26a2e" stroke-width="1.4" />
<polygon points="371.0,285.0 396.0,278.9 396.0,282.5 371.0,288.6" fill="url(#deckP)" />
<polyline points="371.0,288.6 396.0,282.5" fill="none" stroke="#e26a2e" stroke-width="1.4" />
<polygon points="372.0,292.2 396.0,286.4 396.0,290.0 372.0,295.8" fill="url(#deckP)" />
<polyline points="372.0,295.8 396.0,290.0" fill="none" stroke="#e26a2e" stroke-width="1.4" />
<polygon points="338.0,255.0 360.0,250.0 368.3,258.3 355.0,261.7 345.0,263.3" fill="url(#deckP)" />
<polygon points="374.0,295.0 379.0,297.0 357.0,322.5 352.0,320.0" fill="url(#deckP)" fill-opacity="0.7"/>
<polygon points="361.0,262.0 366.0,262.0 380.0,292.0 375.0,293.0" fill="url(#deckP)" fill-opacity="0.5"/>
<g><polyline points="0.0,333.0 10.0,325.3 55.0,312.8 56.0,309.5 105.0,298.0 107.0,283.0 126.7,278.0 137.5,286.0 170.0,278.5 194.0,270.0 195.0,248.0 200.0,242.0 240.0,232.0 255.0,245.3 256.0,254.5 264.2,252.8 300.0,244.5 310.0,240.0 311.7,228.7 334.2,224.5 343.3,232.3 378.3,222.8 396.7,238.7 400.0,240.0" fill="none" stroke="#b9babb" stroke-width="0.5" stroke-opacity="0.5"/>
<polyline points="0.0,330.0 10.0,322.3 55.0,309.8 56.0,306.5 105.0,295.0 107.0,280.0 126.7,275.0 137.5,283.0 170.0,275.5 194.0,267.0 195.0,245.0 200.0,239.0 240.0,229.0 255.0,242.3 256.0,251.5 264.2,249.8 300.0,241.5 310.0,237.0 311.7,225.7 334.2,221.5 343.3,229.3 378.3,219.8 396.7,235.7 400.0,237.0" fill="none" stroke="#b9babb" stroke-width="0.5" stroke-opacity="0.55"/>
<line x1="3.0" y1="326.7" x2="3.0" y2="334.7" stroke="#d6d7d8" stroke-width="0.55" stroke-opacity="0.6" stroke-dasharray="1.6 0.5"/>
<line x1="9.9" y1="321.4" x2="9.9" y2="329.4" stroke="#d6d7d8" stroke-width="0.55" stroke-opacity="0.6" stroke-dasharray="1.6 0.5"/>
<line x1="16.7" y1="319.4" x2="16.7" y2="327.4" stroke="#d6d7d8" stroke-width="0.55" stroke-opacity="0.6" stroke-dasharray="1.6 0.5"/>
<line x1="23.6" y1="317.5" x2="23.6" y2="325.5" stroke="#d6d7d8" stroke-width="0.55" stroke-opacity="0.6" stroke-dasharray="1.6 0.5"/>
<line x1="30.5" y1="315.6" x2="30.5" y2="323.6" stroke="#d6d7d8" stroke-width="0.55" stroke-opacity="0.6" stroke-dasharray="1.6 0.5"/>
<line x1="37.4" y1="313.7" x2="37.4" y2="321.7" stroke="#d6d7d8" stroke-width="0.55" stroke-opacity="0.6" stroke-dasharray="1.6 0.5"/>
<line x1="44.2" y1="311.8" x2="44.2" y2="319.8" stroke="#d6d7d8" stroke-width="0.55" stroke-opacity="0.6" stroke-dasharray="1.6 0.5"/>
<line x1="51.1" y1="309.9" x2="51.1" y2="317.9" stroke="#d6d7d8" stroke-width="0.55" stroke-opacity="0.6" stroke-dasharray="1.6 0.5"/>
<line x1="58.0" y1="305.0" x2="58.0" y2="313.0" stroke="#d6d7d8" stroke-width="0.55" stroke-opacity="0.6" stroke-dasharray="1.6 0.5"/>
<line x1="64.8" y1="303.4" x2="64.8" y2="311.4" stroke="#d6d7d8" stroke-width="0.55" stroke-opacity="0.6" stroke-dasharray="1.6 0.5"/>
<line x1="71.7" y1="301.8" x2="71.7" y2="309.8" stroke="#d6d7d8" stroke-width="0.55" stroke-opacity="0.6" stroke-dasharray="1.6 0.5"/>
<line x1="78.6" y1="300.2" x2="78.6" y2="308.2" stroke="#d6d7d8" stroke-width="0.55" stroke-opacity="0.6" stroke-dasharray="1.6 0.5"/>
<line x1="85.4" y1="298.6" x2="85.4" y2="306.6" stroke="#d6d7d8" stroke-width="0.55" stroke-opacity="0.6" stroke-dasharray="1.6 0.5"/>
<line x1="92.3" y1="297.0" x2="92.3" y2="305.0" stroke="#d6d7d8" stroke-width="0.55" stroke-opacity="0.6" stroke-dasharray="1.6 0.5"/>
<line x1="99.2" y1="295.4" x2="99.2" y2="303.4" stroke="#d6d7d8" stroke-width="0.55" stroke-opacity="0.6" stroke-dasharray="1.6 0.5"/>
<line x1="106.1" y1="286.1" x2="106.1" y2="294.1" stroke="#d6d7d8" stroke-width="0.55" stroke-opacity="0.6" stroke-dasharray="1.6 0.5"/>
<line x1="112.9" y1="277.5" x2="112.9" y2="285.5" stroke="#d6d7d8" stroke-width="0.55" stroke-opacity="0.6" stroke-dasharray="1.6 0.5"/>
<line x1="119.8" y1="275.8" x2="119.8" y2="283.8" stroke="#d6d7d8" stroke-width="0.55" stroke-opacity="0.6" stroke-dasharray="1.6 0.5"/>
<line x1="126.7" y1="274.0" x2="126.7" y2="282.0" stroke="#d6d7d8" stroke-width="0.55" stroke-opacity="0.6" stroke-dasharray="1.6 0.5"/>
<line x1="133.5" y1="279.1" x2="133.5" y2="287.1" stroke="#d6d7d8" stroke-width="0.55" stroke-opacity="0.6" stroke-dasharray="1.6 0.5"/>
<line x1="140.4" y1="281.3" x2="140.4" y2="289.3" stroke="#d6d7d8" stroke-width="0.55" stroke-opacity="0.6" stroke-dasharray="1.6 0.5"/>
<line x1="147.3" y1="279.7" x2="147.3" y2="287.7" stroke="#d6d7d8" stroke-width="0.55" stroke-opacity="0.6" stroke-dasharray="1.6 0.5"/>
<line x1="154.1" y1="278.2" x2="154.1" y2="286.2" stroke="#d6d7d8" stroke-width="0.55" stroke-opacity="0.6" stroke-dasharray="1.6 0.5"/>
<line x1="161.0" y1="276.6" x2="161.0" y2="284.6" stroke="#d6d7d8" stroke-width="0.55" stroke-opacity="0.6" stroke-dasharray="1.6 0.5"/>
<line x1="167.9" y1="275.0" x2="167.9" y2="283.0" stroke="#d6d7d8" stroke-width="0.55" stroke-opacity="0.6" stroke-dasharray="1.6 0.5"/>
<line x1="174.8" y1="272.8" x2="174.8" y2="280.8" stroke="#d6d7d8" stroke-width="0.55" stroke-opacity="0.6" stroke-dasharray="1.6 0.5"/>
<line x1="181.6" y1="270.4" x2="181.6" y2="278.4" stroke="#d6d7d8" stroke-width="0.55" stroke-opacity="0.6" stroke-dasharray="1.6 0.5"/>
<line x1="188.5" y1="268.0" x2="188.5" y2="276.0" stroke="#d6d7d8" stroke-width="0.55" stroke-opacity="0.6" stroke-dasharray="1.6 0.5"/>
<line x1="195.4" y1="243.6" x2="195.4" y2="251.6" stroke="#d6d7d8" stroke-width="0.55" stroke-opacity="0.6" stroke-dasharray="1.6 0.5"/>
<line x1="202.2" y1="237.4" x2="202.2" y2="245.4" stroke="#d6d7d8" stroke-width="0.55" stroke-opacity="0.6" stroke-dasharray="1.6 0.5"/>
<line x1="209.1" y1="235.7" x2="209.1" y2="243.7" stroke="#d6d7d8" stroke-width="0.55" stroke-opacity="0.6" stroke-dasharray="1.6 0.5"/>
<line x1="216.0" y1="234.0" x2="216.0" y2="242.0" stroke="#d6d7d8" stroke-width="0.55" stroke-opacity="0.6" stroke-dasharray="1.6 0.5"/>
<line x1="222.8" y1="232.3" x2="222.8" y2="240.3" stroke="#d6d7d8" stroke-width="0.55" stroke-opacity="0.6" stroke-dasharray="1.6 0.5"/>
<line x1="229.7" y1="230.6" x2="229.7" y2="238.6" stroke="#d6d7d8" stroke-width="0.55" stroke-opacity="0.6" stroke-dasharray="1.6 0.5"/>
<line x1="236.6" y1="228.9" x2="236.6" y2="236.9" stroke="#d6d7d8" stroke-width="0.55" stroke-opacity="0.6" stroke-dasharray="1.6 0.5"/>
<line x1="243.5" y1="231.1" x2="243.5" y2="239.1" stroke="#d6d7d8" stroke-width="0.55" stroke-opacity="0.6" stroke-dasharray="1.6 0.5"/>
<line x1="250.3" y1="237.2" x2="250.3" y2="245.2" stroke="#d6d7d8" stroke-width="0.55" stroke-opacity="0.6" stroke-dasharray="1.6 0.5"/>
<line x1="257.2" y1="250.3" x2="257.2" y2="258.3" stroke="#d6d7d8" stroke-width="0.55" stroke-opacity="0.6" stroke-dasharray="1.6 0.5"/>
<line x1="264.1" y1="248.8" x2="264.1" y2="256.8" stroke="#d6d7d8" stroke-width="0.55" stroke-opacity="0.6" stroke-dasharray="1.6 0.5"/>
<line x1="270.9" y1="247.2" x2="270.9" y2="255.2" stroke="#d6d7d8" stroke-width="0.55" stroke-opacity="0.6" stroke-dasharray="1.6 0.5"/>
<line x1="277.8" y1="245.6" x2="277.8" y2="253.6" stroke="#d6d7d8" stroke-width="0.55" stroke-opacity="0.6" stroke-dasharray="1.6 0.5"/>
<line x1="284.7" y1="244.1" x2="284.7" y2="252.1" stroke="#d6d7d8" stroke-width="0.55" stroke-opacity="0.6" stroke-dasharray="1.6 0.5"/>
<line x1="291.5" y1="242.5" x2="291.5" y2="250.5" stroke="#d6d7d8" stroke-width="0.55" stroke-opacity="0.6" stroke-dasharray="1.6 0.5"/>
<line x1="298.4" y1="240.9" x2="298.4" y2="248.9" stroke="#d6d7d8" stroke-width="0.55" stroke-opacity="0.6" stroke-dasharray="1.6 0.5"/>
<line x1="305.3" y1="238.1" x2="305.3" y2="246.1" stroke="#d6d7d8" stroke-width="0.55" stroke-opacity="0.6" stroke-dasharray="1.6 0.5"/>
<line x1="312.2" y1="224.6" x2="312.2" y2="232.6" stroke="#d6d7d8" stroke-width="0.55" stroke-opacity="0.6" stroke-dasharray="1.6 0.5"/>
<line x1="319.0" y1="223.3" x2="319.0" y2="231.3" stroke="#d6d7d8" stroke-width="0.55" stroke-opacity="0.6" stroke-dasharray="1.6 0.5"/>
<line x1="325.9" y1="222.1" x2="325.9" y2="230.1" stroke="#d6d7d8" stroke-width="0.55" stroke-opacity="0.6" stroke-dasharray="1.6 0.5"/>
<line x1="332.8" y1="220.8" x2="332.8" y2="228.8" stroke="#d6d7d8" stroke-width="0.55" stroke-opacity="0.6" stroke-dasharray="1.6 0.5"/>
<line x1="339.6" y1="225.2" x2="339.6" y2="233.2" stroke="#d6d7d8" stroke-width="0.55" stroke-opacity="0.6" stroke-dasharray="1.6 0.5"/>
<line x1="346.5" y1="227.4" x2="346.5" y2="235.4" stroke="#d6d7d8" stroke-width="0.55" stroke-opacity="0.6" stroke-dasharray="1.6 0.5"/>
<line x1="353.4" y1="225.6" x2="353.4" y2="233.6" stroke="#d6d7d8" stroke-width="0.55" stroke-opacity="0.6" stroke-dasharray="1.6 0.5"/>
<line x1="360.2" y1="223.7" x2="360.2" y2="231.7" stroke="#d6d7d8" stroke-width="0.55" stroke-opacity="0.6" stroke-dasharray="1.6 0.5"/>
<line x1="367.1" y1="221.8" x2="367.1" y2="229.8" stroke="#d6d7d8" stroke-width="0.55" stroke-opacity="0.6" stroke-dasharray="1.6 0.5"/>
<line x1="374.0" y1="220.0" x2="374.0" y2="228.0" stroke="#d6d7d8" stroke-width="0.55" stroke-opacity="0.6" stroke-dasharray="1.6 0.5"/>
<line x1="380.9" y1="221.0" x2="380.9" y2="229.0" stroke="#d6d7d8" stroke-width="0.55" stroke-opacity="0.6" stroke-dasharray="1.6 0.5"/>
<line x1="387.7" y1="226.9" x2="387.7" y2="234.9" stroke="#d6d7d8" stroke-width="0.55" stroke-opacity="0.6" stroke-dasharray="1.6 0.5"/>
<line x1="394.6" y1="232.9" x2="394.6" y2="240.9" stroke="#d6d7d8" stroke-width="0.55" stroke-opacity="0.6" stroke-dasharray="1.6 0.5"/>
<line x1="150" y1="292.7" x2="392" y2="233.9" stroke="#a4a6a8" stroke-width="0.45" stroke-opacity="0.35"/>
<line x1="150" y1="296.2" x2="392" y2="237.4" stroke="#a4a6a8" stroke-width="0.45" stroke-opacity="0.4"/>
<line x1="150" y1="307.7" x2="392" y2="248.9" stroke="#a4a6a8" stroke-width="0.45" stroke-opacity="0.35"/>
<line x1="150" y1="312.2" x2="392" y2="253.4" stroke="#a4a6a8" stroke-width="0.45" stroke-opacity="0.4"/>
<line x1="150" y1="317.2" x2="392" y2="258.4" stroke="#a4a6a8" stroke-width="0.45" stroke-opacity="0.35"/>
<line x1="100" y1="343.9" x2="392" y2="272.9" stroke="#a4a6a8" stroke-width="0.45" stroke-opacity="0.4"/>
<line x1="100" y1="347.9" x2="392" y2="276.9" stroke="#a4a6a8" stroke-width="0.45" stroke-opacity="0.35"/>
<line x1="100" y1="356.9" x2="392" y2="285.9" stroke="#a4a6a8" stroke-width="0.45" stroke-opacity="0.4"/>
<line x1="100" y1="360.9" x2="392" y2="289.9" stroke="#a4a6a8" stroke-width="0.45" stroke-opacity="0.35"/>
<line x1="100" y1="369.9" x2="392" y2="298.9" stroke="#a4a6a8" stroke-width="0.45" stroke-opacity="0.5"/>
<line x1="100" y1="374.4" x2="392" y2="303.4" stroke="#a4a6a8" stroke-width="0.45" stroke-opacity="0.5"/>
<line x1="100" y1="378.9" x2="392" y2="307.9" stroke="#a4a6a8" stroke-width="0.45" stroke-opacity="0.45"/>
<polyline points="0.0,380.3 6.7,386.2 46.7,377.0 55.0,379.5 110.0,366.5 123.0,365.3" fill="none" stroke="#a4a6a8" stroke-width="0.45" stroke-opacity="0.5"/>
<polyline points="0.0,384.8 6.7,390.7 46.7,381.5 55.0,384.0 110.0,371.0 123.0,369.8" fill="none" stroke="#a4a6a8" stroke-width="0.45" stroke-opacity="0.5"/>
<polyline points="0.0,389.8 6.7,395.7 46.7,386.5 55.0,389.0 110.0,376.0 123.0,374.8" fill="none" stroke="#a4a6a8" stroke-width="0.45" stroke-opacity="0.45"/>
<polyline points="0.0,394.8 6.7,400.7 46.7,391.5 55.0,394.0 110.0,381.0 123.0,379.8" fill="none" stroke="#a4a6a8" stroke-width="0.45" stroke-opacity="0.4"/>
<line x1="-6.9" y1="331.0" x2="-6.9" y2="394.5" stroke="#d6d7d8" stroke-width="0.6" stroke-opacity="0.9" stroke-dasharray="1.5 0.45"/>
<line x1="-3.0" y1="331.0" x2="-3.0" y2="392.1" stroke="#d6d7d8" stroke-width="0.6" stroke-opacity="0.75" stroke-dasharray="1.5 0.45"/>
<polyline points="-3.0,391.5 7.1,380.5 -3.0,368.5" fill="none" stroke="#45bcbc" stroke-width="0.55" stroke-opacity="0.75"/>
<line x1="13.7" y1="322.3" x2="13.7" y2="399.3" stroke="#d6d7d8" stroke-width="0.6" stroke-opacity="0.9" stroke-dasharray="1.5 0.45"/>
<line x1="17.6" y1="322.3" x2="17.6" y2="396.9" stroke="#d6d7d8" stroke-width="0.6" stroke-opacity="0.75" stroke-dasharray="1.5 0.45"/>
<polyline points="13.7,326.3 24.0,360.8 13.7,397.3" fill="none" stroke="#45bcbc" stroke-width="0.6" stroke-opacity="0.85"/>
<line x1="34.3" y1="316.6" x2="34.3" y2="403.5" stroke="#d6d7d8" stroke-width="0.6" stroke-opacity="0.9" stroke-dasharray="1.5 0.45"/>
<line x1="38.2" y1="316.6" x2="38.2" y2="401.1" stroke="#d6d7d8" stroke-width="0.6" stroke-opacity="0.75" stroke-dasharray="1.5 0.45"/>
<line x1="54.9" y1="310.8" x2="54.9" y2="399.3" stroke="#d6d7d8" stroke-width="0.6" stroke-opacity="0.9" stroke-dasharray="1.5 0.45"/>
<line x1="58.8" y1="310.8" x2="58.8" y2="396.9" stroke="#d6d7d8" stroke-width="0.6" stroke-opacity="0.75" stroke-dasharray="1.5 0.45"/>
<polyline points="54.9,314.8 65.2,355.0 54.9,397.3" fill="none" stroke="#45bcbc" stroke-width="0.6" stroke-opacity="0.85"/>
<polyline points="58.8,396.3 68.9,385.3 58.8,373.3" fill="none" stroke="#45bcbc" stroke-width="0.55" stroke-opacity="0.75"/>
<line x1="75.5" y1="302.9" x2="75.5" y2="389.3" stroke="#d6d7d8" stroke-width="0.6" stroke-opacity="0.9" stroke-dasharray="1.5 0.45"/>
<line x1="79.4" y1="302.9" x2="79.4" y2="386.9" stroke="#d6d7d8" stroke-width="0.6" stroke-opacity="0.75" stroke-dasharray="1.5 0.45"/>
<line x1="96.1" y1="298.1" x2="96.1" y2="385.0" stroke="#d6d7d8" stroke-width="0.6" stroke-opacity="0.9" stroke-dasharray="1.5 0.45"/>
<line x1="100.0" y1="298.1" x2="100.0" y2="382.6" stroke="#d6d7d8" stroke-width="0.6" stroke-opacity="0.75" stroke-dasharray="1.5 0.45"/>
<polyline points="96.1,302.1 106.4,341.5 96.1,383.0" fill="none" stroke="#45bcbc" stroke-width="0.6" stroke-opacity="0.85"/>
<line x1="116.7" y1="278.5" x2="116.7" y2="382.2" stroke="#d6d7d8" stroke-width="0.6" stroke-opacity="0.9" stroke-dasharray="1.5 0.45"/>
<line x1="120.6" y1="278.5" x2="120.6" y2="379.8" stroke="#d6d7d8" stroke-width="0.6" stroke-opacity="0.75" stroke-dasharray="1.5 0.45"/>
<polyline points="120.6,379.2 130.7,368.2 120.6,356.2" fill="none" stroke="#45bcbc" stroke-width="0.55" stroke-opacity="0.75"/>
<line x1="137.3" y1="283.9" x2="137.3" y2="374.8" stroke="#d6d7d8" stroke-width="0.6" stroke-opacity="0.9" stroke-dasharray="1.5 0.45"/>
<line x1="141.2" y1="283.9" x2="141.2" y2="372.4" stroke="#d6d7d8" stroke-width="0.6" stroke-opacity="0.75" stroke-dasharray="1.5 0.45"/>
<polyline points="137.3,287.9 147.6,329.3 137.3,372.8" fill="none" stroke="#45bcbc" stroke-width="0.6" stroke-opacity="0.85"/>
<line x1="157.9" y1="288.4" x2="157.9" y2="366.9" stroke="#d6d7d8" stroke-width="0.6" stroke-opacity="0.9" stroke-dasharray="1.5 0.45"/>
<line x1="161.8" y1="288.4" x2="161.8" y2="364.6" stroke="#d6d7d8" stroke-width="0.6" stroke-opacity="0.75" stroke-dasharray="1.5 0.45"/>
<line x1="178.5" y1="283.4" x2="178.5" y2="362.8" stroke="#d6d7d8" stroke-width="0.6" stroke-opacity="0.9" stroke-dasharray="1.5 0.45"/>
<line x1="182.4" y1="283.4" x2="182.4" y2="360.5" stroke="#d6d7d8" stroke-width="0.6" stroke-opacity="0.75" stroke-dasharray="1.5 0.45"/>
<polyline points="178.5,287.4 188.8,323.1 178.5,360.8" fill="none" stroke="#45bcbc" stroke-width="0.6" stroke-opacity="0.85"/>
<polyline points="182.4,359.8 192.5,348.8 182.4,336.8" fill="none" stroke="#45bcbc" stroke-width="0.55" stroke-opacity="0.75"/>
<line x1="199.1" y1="278.4" x2="199.1" y2="356.5" stroke="#d6d7d8" stroke-width="0.6" stroke-opacity="0.9" stroke-dasharray="1.5 0.45"/>
<line x1="203.0" y1="278.4" x2="203.0" y2="354.1" stroke="#d6d7d8" stroke-width="0.6" stroke-opacity="0.75" stroke-dasharray="1.5 0.45"/>
<line x1="219.7" y1="273.4" x2="219.7" y2="352.2" stroke="#d6d7d8" stroke-width="0.6" stroke-opacity="0.9" stroke-dasharray="1.5 0.45"/>
<line x1="223.6" y1="273.4" x2="223.6" y2="349.9" stroke="#d6d7d8" stroke-width="0.6" stroke-opacity="0.75" stroke-dasharray="1.5 0.45"/>
<polyline points="219.7,277.4 230.0,312.8 219.7,350.2" fill="none" stroke="#45bcbc" stroke-width="0.6" stroke-opacity="0.85"/>
<line x1="240.3" y1="268.4" x2="240.3" y2="349.1" stroke="#d6d7d8" stroke-width="0.6" stroke-opacity="0.9" stroke-dasharray="1.5 0.45"/>
<line x1="244.2" y1="268.4" x2="244.2" y2="346.7" stroke="#d6d7d8" stroke-width="0.6" stroke-opacity="0.75" stroke-dasharray="1.5 0.45"/>
<polyline points="244.2,346.1 254.3,335.1 244.2,323.1" fill="none" stroke="#45bcbc" stroke-width="0.55" stroke-opacity="0.75"/>
<line x1="260.9" y1="263.4" x2="260.9" y2="343.6" stroke="#d6d7d8" stroke-width="0.6" stroke-opacity="0.9" stroke-dasharray="1.5 0.45"/>
<line x1="264.8" y1="263.4" x2="264.8" y2="341.3" stroke="#d6d7d8" stroke-width="0.6" stroke-opacity="0.75" stroke-dasharray="1.5 0.45"/>
<polyline points="260.9,267.4 271.2,303.5 260.9,341.6" fill="none" stroke="#45bcbc" stroke-width="0.6" stroke-opacity="0.85"/>
<line x1="281.5" y1="258.4" x2="281.5" y2="336.4" stroke="#d6d7d8" stroke-width="0.6" stroke-opacity="0.9" stroke-dasharray="1.5 0.45"/>
<line x1="285.4" y1="258.4" x2="285.4" y2="334.0" stroke="#d6d7d8" stroke-width="0.6" stroke-opacity="0.75" stroke-dasharray="1.5 0.45"/>
<line x1="302.1" y1="253.4" x2="302.1" y2="331.0" stroke="#d6d7d8" stroke-width="0.6" stroke-opacity="0.9" stroke-dasharray="1.5 0.45"/>
<line x1="306.0" y1="253.4" x2="306.0" y2="328.6" stroke="#d6d7d8" stroke-width="0.6" stroke-opacity="0.75" stroke-dasharray="1.5 0.45"/>
<polyline points="302.1,257.4 312.4,292.2 302.1,329.0" fill="none" stroke="#45bcbc" stroke-width="0.6" stroke-opacity="0.85"/>
<polyline points="306.0,328.0 316.1,317.0 306.0,305.0" fill="none" stroke="#45bcbc" stroke-width="0.55" stroke-opacity="0.75"/>
<line x1="322.7" y1="248.4" x2="322.7" y2="326.5" stroke="#d6d7d8" stroke-width="0.6" stroke-opacity="0.9" stroke-dasharray="1.5 0.45"/>
<line x1="326.6" y1="248.4" x2="326.6" y2="324.1" stroke="#d6d7d8" stroke-width="0.6" stroke-opacity="0.75" stroke-dasharray="1.5 0.45"/>
<line x1="343.3" y1="243.4" x2="343.3" y2="324.4" stroke="#d6d7d8" stroke-width="0.6" stroke-opacity="0.9" stroke-dasharray="1.5 0.45"/>
<line x1="347.2" y1="243.4" x2="347.2" y2="322.1" stroke="#d6d7d8" stroke-width="0.6" stroke-opacity="0.75" stroke-dasharray="1.5 0.45"/>
<polyline points="343.3,247.4 353.6,283.9 343.3,322.4" fill="none" stroke="#45bcbc" stroke-width="0.6" stroke-opacity="0.85"/>
<line x1="363.9" y1="238.4" x2="363.9" y2="320.1" stroke="#d6d7d8" stroke-width="0.6" stroke-opacity="0.9" stroke-dasharray="1.5 0.45"/>
<line x1="367.8" y1="238.4" x2="367.8" y2="317.7" stroke="#d6d7d8" stroke-width="0.6" stroke-opacity="0.75" stroke-dasharray="1.5 0.45"/>
<polyline points="367.8,317.1 377.9,306.1 367.8,294.1" fill="none" stroke="#45bcbc" stroke-width="0.55" stroke-opacity="0.75"/>
<line x1="384.5" y1="226.2" x2="384.5" y2="308.0" stroke="#d6d7d8" stroke-width="0.6" stroke-opacity="0.9" stroke-dasharray="1.5 0.45"/>
<line x1="388.4" y1="226.2" x2="388.4" y2="305.7" stroke="#d6d7d8" stroke-width="0.6" stroke-opacity="0.75" stroke-dasharray="1.5 0.45"/>
<polyline points="384.5,230.2 394.8,267.1 384.5,306.0" fill="none" stroke="#45bcbc" stroke-width="0.6" stroke-opacity="0.85"/>
<line x1="1.5" y1="363.1" x2="1.5" y2="396.6" stroke="#d6d7d8" stroke-width="0.6" stroke-opacity="0.6" stroke-dasharray="1.5 0.45"/>
<line x1="6.7" y1="367.7" x2="6.7" y2="395.6" stroke="#d6d7d8" stroke-width="0.6" stroke-opacity="0.6" stroke-dasharray="1.5 0.45"/>
<line x1="11.8" y1="366.5" x2="11.8" y2="400.2" stroke="#d6d7d8" stroke-width="0.6" stroke-opacity="0.6" stroke-dasharray="1.5 0.45"/>
<line x1="17.0" y1="365.3" x2="17.0" y2="399.9" stroke="#d6d7d8" stroke-width="0.6" stroke-opacity="0.6" stroke-dasharray="1.5 0.45"/>
<line x1="22.1" y1="364.2" x2="22.1" y2="401.0" stroke="#d6d7d8" stroke-width="0.6" stroke-opacity="0.6" stroke-dasharray="1.5 0.45"/>
<line x1="27.2" y1="363.0" x2="27.2" y2="400.9" stroke="#d6d7d8" stroke-width="0.6" stroke-opacity="0.6" stroke-dasharray="1.5 0.45"/>
<line x1="32.4" y1="361.8" x2="32.4" y2="401.6" stroke="#d6d7d8" stroke-width="0.6" stroke-opacity="0.6" stroke-dasharray="1.5 0.45"/>
<line x1="37.5" y1="360.6" x2="37.5" y2="403.4" stroke="#d6d7d8" stroke-width="0.6" stroke-opacity="0.6" stroke-dasharray="1.5 0.45"/>
<line x1="42.7" y1="359.4" x2="42.7" y2="401.1" stroke="#d6d7d8" stroke-width="0.6" stroke-opacity="0.6" stroke-dasharray="1.5 0.45"/>
<line x1="47.8" y1="358.8" x2="47.8" y2="401.7" stroke="#d6d7d8" stroke-width="0.6" stroke-opacity="0.6" stroke-dasharray="1.5 0.45"/>
<line x1="53.0" y1="360.4" x2="53.0" y2="400.7" stroke="#d6d7d8" stroke-width="0.6" stroke-opacity="0.6" stroke-dasharray="1.5 0.45"/>
<line x1="58.1" y1="360.3" x2="58.1" y2="398.6" stroke="#d6d7d8" stroke-width="0.6" stroke-opacity="0.6" stroke-dasharray="1.5 0.45"/>
<line x1="63.3" y1="359.1" x2="63.3" y2="396.7" stroke="#d6d7d8" stroke-width="0.6" stroke-opacity="0.6" stroke-dasharray="1.5 0.45"/>
<line x1="68.4" y1="357.9" x2="68.4" y2="389.4" stroke="#d6d7d8" stroke-width="0.6" stroke-opacity="0.6" stroke-dasharray="1.5 0.45"/>
<line x1="73.6" y1="356.7" x2="73.6" y2="387.2" stroke="#d6d7d8" stroke-width="0.6" stroke-opacity="0.6" stroke-dasharray="1.5 0.45"/>
<line x1="78.8" y1="355.5" x2="78.8" y2="386.9" stroke="#d6d7d8" stroke-width="0.6" stroke-opacity="0.6" stroke-dasharray="1.5 0.45"/>
<line x1="83.9" y1="354.3" x2="83.9" y2="387.8" stroke="#d6d7d8" stroke-width="0.6" stroke-opacity="0.6" stroke-dasharray="1.5 0.45"/>
<line x1="89.1" y1="353.0" x2="89.1" y2="386.0" stroke="#d6d7d8" stroke-width="0.6" stroke-opacity="0.6" stroke-dasharray="1.5 0.45"/>
<line x1="94.2" y1="351.8" x2="94.2" y2="384.4" stroke="#d6d7d8" stroke-width="0.6" stroke-opacity="0.6" stroke-dasharray="1.5 0.45"/>
<line x1="99.4" y1="350.6" x2="99.4" y2="384.2" stroke="#d6d7d8" stroke-width="0.6" stroke-opacity="0.6" stroke-dasharray="1.5 0.45"/>
<line x1="104.5" y1="349.3" x2="104.5" y2="382.6" stroke="#d6d7d8" stroke-width="0.6" stroke-opacity="0.6" stroke-dasharray="1.5 0.45"/>
<line x1="109.7" y1="348.1" x2="109.7" y2="383.4" stroke="#d6d7d8" stroke-width="0.6" stroke-opacity="0.6" stroke-dasharray="1.5 0.45"/>
<line x1="114.8" y1="346.9" x2="114.8" y2="384.2" stroke="#d6d7d8" stroke-width="0.6" stroke-opacity="0.6" stroke-dasharray="1.5 0.45"/>
<line x1="120.0" y1="345.6" x2="120.0" y2="382.8" stroke="#d6d7d8" stroke-width="0.6" stroke-opacity="0.6" stroke-dasharray="1.5 0.45"/>
<line x1="125.1" y1="345.1" x2="125.1" y2="380.2" stroke="#d6d7d8" stroke-width="0.6" stroke-opacity="0.6" stroke-dasharray="1.5 0.45"/>
<polyline points="8.0,382.4 13.2,397.4 18.4,383.4" fill="none" stroke="#45bcbc" stroke-width="0.6" stroke-opacity="0.8"/>
<polyline points="28.8,377.6 34.0,402.0 39.2,378.6" fill="none" stroke="#45bcbc" stroke-width="0.6" stroke-opacity="0.8"/>
<polyline points="49.6,374.4 54.8,400.7 60.0,375.4" fill="none" stroke="#45bcbc" stroke-width="0.6" stroke-opacity="0.8"/>
<polyline points="70.4,372.4 75.6,388.9 80.8,373.4" fill="none" stroke="#45bcbc" stroke-width="0.6" stroke-opacity="0.8"/>
<polyline points="91.2,367.5 96.4,385.5 101.6,368.5" fill="none" stroke="#45bcbc" stroke-width="0.6" stroke-opacity="0.8"/>
<polyline points="112.0,362.5 117.2,383.4 122.4,363.5" fill="none" stroke="#45bcbc" stroke-width="0.6" stroke-opacity="0.8"/>
<line x1="255.3" y1="239.0" x2="255.3" y2="263.0" stroke="#d6d7d8" stroke-width="0.6" stroke-opacity="0.7" stroke-dasharray="1.5 0.45"/>
<line x1="259.3" y1="241.0" x2="259.3" y2="263.0" stroke="#d6d7d8" stroke-width="0.55" stroke-opacity="0.5" stroke-dasharray="1.5 0.45"/>
<line x1="276.0" y1="233.7" x2="276.0" y2="257.7" stroke="#d6d7d8" stroke-width="0.6" stroke-opacity="0.7" stroke-dasharray="1.5 0.45"/>
<line x1="280.0" y1="235.7" x2="280.0" y2="257.7" stroke="#d6d7d8" stroke-width="0.55" stroke-opacity="0.5" stroke-dasharray="1.5 0.45"/>
<line x1="292.8" y1="237.5" x2="292.8" y2="261.5" stroke="#d6d7d8" stroke-width="0.6" stroke-opacity="0.7" stroke-dasharray="1.5 0.45"/>
<line x1="296.8" y1="239.5" x2="296.8" y2="261.5" stroke="#d6d7d8" stroke-width="0.55" stroke-opacity="0.5" stroke-dasharray="1.5 0.45"/>
<line x1="308.8" y1="228.3" x2="308.8" y2="252.3" stroke="#d6d7d8" stroke-width="0.6" stroke-opacity="0.7" stroke-dasharray="1.5 0.45"/>
<line x1="312.8" y1="230.3" x2="312.8" y2="252.3" stroke="#d6d7d8" stroke-width="0.55" stroke-opacity="0.5" stroke-dasharray="1.5 0.45"/>
<polyline points="255.3,243.0 276.0,238.0 292.8,234.0 308.8,230.0" fill="none" stroke="#b9babb" stroke-width="0.5" stroke-opacity="0.55"/>
<polyline points="255.3,247.0 276.0,242.0 292.8,238.0 308.8,234.0" fill="none" stroke="#b9babb" stroke-width="0.5" stroke-opacity="0.55"/>
<polyline points="255.3,251.0 276.0,246.0 292.8,242.0 308.8,238.0" fill="none" stroke="#b9babb" stroke-width="0.5" stroke-opacity="0.55"/>
<polyline points="255.3,241 265,248 276,236 292.8,252" fill="none" stroke="#49b3b0" stroke-width="0.5" stroke-opacity="0.7"/>
<line x1="3.4" y1="325.4" x2="3.4" y2="347.4" stroke="#d6d7d8" stroke-width="0.55" stroke-opacity="0.55" stroke-dasharray="1.5 0.45"/>
<line x1="24.0" y1="316.4" x2="24.0" y2="338.4" stroke="#d6d7d8" stroke-width="0.55" stroke-opacity="0.55" stroke-dasharray="1.5 0.45"/>
<line x1="44.6" y1="310.7" x2="44.6" y2="332.7" stroke="#d6d7d8" stroke-width="0.55" stroke-opacity="0.55" stroke-dasharray="1.5 0.45"/>
<line x1="65.2" y1="302.3" x2="65.2" y2="324.3" stroke="#d6d7d8" stroke-width="0.55" stroke-opacity="0.55" stroke-dasharray="1.5 0.45"/>
<line x1="85.8" y1="297.5" x2="85.8" y2="319.5" stroke="#d6d7d8" stroke-width="0.55" stroke-opacity="0.55" stroke-dasharray="1.5 0.45"/>
<line x1="106.4" y1="282.5" x2="106.4" y2="304.5" stroke="#d6d7d8" stroke-width="0.55" stroke-opacity="0.55" stroke-dasharray="1.5 0.45"/>
<line x1="127.0" y1="273.2" x2="127.0" y2="295.2" stroke="#d6d7d8" stroke-width="0.55" stroke-opacity="0.55" stroke-dasharray="1.5 0.45"/>
<line x1="147.6" y1="278.7" x2="147.6" y2="300.7" stroke="#d6d7d8" stroke-width="0.55" stroke-opacity="0.55" stroke-dasharray="1.5 0.45"/>
<line x1="168.2" y1="273.9" x2="168.2" y2="298.9" stroke="#d6d7d8" stroke-width="0.55" stroke-opacity="0.55" stroke-dasharray="1.5 0.45"/>
<line x1="188.8" y1="266.8" x2="188.8" y2="293.9" stroke="#d6d7d8" stroke-width="0.55" stroke-opacity="0.55" stroke-dasharray="1.5 0.45"/>
<line x1="209.4" y1="234.7" x2="209.4" y2="288.9" stroke="#d6d7d8" stroke-width="0.55" stroke-opacity="0.55" stroke-dasharray="1.5 0.45"/>
<line x1="230.0" y1="229.5" x2="230.0" y2="283.9" stroke="#d6d7d8" stroke-width="0.55" stroke-opacity="0.55" stroke-dasharray="1.5 0.45"/>
<line x1="250.6" y1="236.4" x2="250.6" y2="278.9" stroke="#d6d7d8" stroke-width="0.55" stroke-opacity="0.55" stroke-dasharray="1.5 0.45"/>
<line x1="271.2" y1="246.2" x2="271.2" y2="273.9" stroke="#d6d7d8" stroke-width="0.55" stroke-opacity="0.55" stroke-dasharray="1.5 0.45"/>
<line x1="291.8" y1="241.4" x2="291.8" y2="268.9" stroke="#d6d7d8" stroke-width="0.55" stroke-opacity="0.55" stroke-dasharray="1.5 0.45"/>
<line x1="312.4" y1="223.6" x2="312.4" y2="263.9" stroke="#d6d7d8" stroke-width="0.55" stroke-opacity="0.55" stroke-dasharray="1.5 0.45"/>
<line x1="333.0" y1="219.7" x2="333.0" y2="258.9" stroke="#d6d7d8" stroke-width="0.55" stroke-opacity="0.55" stroke-dasharray="1.5 0.45"/>
<line x1="353.6" y1="224.5" x2="353.6" y2="253.9" stroke="#d6d7d8" stroke-width="0.55" stroke-opacity="0.55" stroke-dasharray="1.5 0.45"/>
<line x1="148.3" y1="267.4" x2="148.3" y2="289.4" stroke="#d6d7d8" stroke-width="0.6" stroke-opacity="0.8" stroke-dasharray="1.5 0.45"/>
<line x1="151.7" y1="266.6" x2="151.7" y2="288.6" stroke="#d6d7d8" stroke-width="0.6" stroke-opacity="0.7" stroke-dasharray="1.5 0.45"/>
<line x1="160.8" y1="264.3" x2="160.8" y2="286.3" stroke="#d6d7d8" stroke-width="0.6" stroke-opacity="0.6" stroke-dasharray="1.5 0.45"/>
<line x1="168.3" y1="262.4" x2="168.3" y2="284.4" stroke="#d6d7d8" stroke-width="0.6" stroke-opacity="0.8" stroke-dasharray="1.5 0.45"/>
<line x1="172.5" y1="261.4" x2="172.5" y2="283.4" stroke="#d6d7d8" stroke-width="0.6" stroke-opacity="0.7" stroke-dasharray="1.5 0.45"/>
<line x1="181" y1="259.2" x2="181" y2="281.2" stroke="#d6d7d8" stroke-width="0.6" stroke-opacity="0.55" stroke-dasharray="1.5 0.45"/>
<line x1="190" y1="257.0" x2="190" y2="279.0" stroke="#d6d7d8" stroke-width="0.6" stroke-opacity="0.8" stroke-dasharray="1.5 0.45"/>
<line x1="196.7" y1="255.3" x2="196.7" y2="277.3" stroke="#d6d7d8" stroke-width="0.6" stroke-opacity="0.7" stroke-dasharray="1.5 0.45"/>
<line x1="148.3" y1="267.4" x2="196.7" y2="255.3" stroke="#b9babb" stroke-width="0.5" stroke-opacity="0.7"/>
<line x1="148.3" y1="271.4" x2="196.7" y2="259.3" stroke="#b9babb" stroke-width="0.5" stroke-opacity="0.55"/>
<line x1="148.3" y1="275.4" x2="196.7" y2="263.3" stroke="#b9babb" stroke-width="0.5" stroke-opacity="0.55"/>
<line x1="148.3" y1="279.4" x2="196.7" y2="267.3" stroke="#b9babb" stroke-width="0.5" stroke-opacity="0.45"/>
<polyline points="148.3,278 151.7,266 163,277 172.5,261.5 181,272 190,257.5" fill="none" stroke="#45bcbc" stroke-width="0.55" stroke-opacity="0.8"/>
<line x1="395.7" y1="238" x2="395.7" y2="303" stroke="#d6d7d8" stroke-width="0.6" stroke-opacity="0.7" stroke-dasharray="1.5 0.45"/>
<line x1="399.6" y1="238" x2="399.6" y2="302" stroke="#d6d7d8" stroke-width="0.6" stroke-opacity="0.7" stroke-dasharray="1.5 0.45"/>
<rect x="-7.8" y="394.3" width="1.8" height="0.9" fill="#8c7b55"/>
<rect x="-3.9" y="391.9" width="1.8" height="0.9" fill="#8c7b55"/>
<rect x="12.8" y="399.1" width="1.8" height="0.9" fill="#8c7b55"/>
<rect x="16.7" y="396.7" width="1.8" height="0.9" fill="#8c7b55"/>
<rect x="33.4" y="403.3" width="1.8" height="0.9" fill="#8c7b55"/>
<rect x="37.3" y="400.9" width="1.8" height="0.9" fill="#8c7b55"/>
<rect x="54.0" y="399.1" width="1.8" height="0.9" fill="#8c7b55"/>
<rect x="57.9" y="396.7" width="1.8" height="0.9" fill="#8c7b55"/>
<rect x="74.6" y="389.1" width="1.8" height="0.9" fill="#8c7b55"/>
<rect x="78.5" y="386.7" width="1.8" height="0.9" fill="#8c7b55"/>
<rect x="95.2" y="384.8" width="1.8" height="0.9" fill="#8c7b55"/>
<rect x="99.1" y="382.4" width="1.8" height="0.9" fill="#8c7b55"/>
<rect x="115.8" y="382.0" width="1.8" height="0.9" fill="#8c7b55"/>
<rect x="119.7" y="379.6" width="1.8" height="0.9" fill="#8c7b55"/>
<rect x="136.4" y="374.6" width="1.8" height="0.9" fill="#8c7b55"/>
<rect x="140.3" y="372.2" width="1.8" height="0.9" fill="#8c7b55"/>
<rect x="157.0" y="366.7" width="1.8" height="0.9" fill="#8c7b55"/>
<rect x="160.9" y="364.4" width="1.8" height="0.9" fill="#8c7b55"/>
<rect x="177.6" y="362.6" width="1.8" height="0.9" fill="#8c7b55"/>
<rect x="181.5" y="360.3" width="1.8" height="0.9" fill="#8c7b55"/>
<rect x="198.2" y="356.3" width="1.8" height="0.9" fill="#8c7b55"/>
<rect x="202.1" y="353.9" width="1.8" height="0.9" fill="#8c7b55"/>
<rect x="218.8" y="352.0" width="1.8" height="0.9" fill="#8c7b55"/>
<rect x="222.7" y="349.7" width="1.8" height="0.9" fill="#8c7b55"/>
<rect x="239.4" y="348.9" width="1.8" height="0.9" fill="#8c7b55"/>
<rect x="243.3" y="346.5" width="1.8" height="0.9" fill="#8c7b55"/>
<rect x="260.0" y="343.4" width="1.8" height="0.9" fill="#8c7b55"/>
<rect x="263.9" y="341.1" width="1.8" height="0.9" fill="#8c7b55"/>
<rect x="280.6" y="336.2" width="1.8" height="0.9" fill="#8c7b55"/>
<rect x="284.5" y="333.8" width="1.8" height="0.9" fill="#8c7b55"/>
<rect x="301.2" y="330.8" width="1.8" height="0.9" fill="#8c7b55"/>
<rect x="305.1" y="328.4" width="1.8" height="0.9" fill="#8c7b55"/>
<rect x="321.8" y="326.3" width="1.8" height="0.9" fill="#8c7b55"/>
<rect x="325.7" y="323.9" width="1.8" height="0.9" fill="#8c7b55"/>
<rect x="342.4" y="324.2" width="1.8" height="0.9" fill="#8c7b55"/>
<rect x="346.3" y="321.9" width="1.8" height="0.9" fill="#8c7b55"/>
<rect x="363.0" y="319.9" width="1.8" height="0.9" fill="#8c7b55"/>
<rect x="366.9" y="317.5" width="1.8" height="0.9" fill="#8c7b55"/>
<rect x="383.6" y="307.8" width="1.8" height="0.9" fill="#8c7b55"/>
<rect x="387.5" y="305.5" width="1.8" height="0.9" fill="#8c7b55"/>
<rect x="0.6" y="396.4" width="1.8" height="0.9" fill="#8c7b55"/>
<rect x="5.8" y="395.4" width="1.8" height="0.9" fill="#8c7b55"/>
<rect x="10.9" y="400.0" width="1.8" height="0.9" fill="#8c7b55"/>
<rect x="16.1" y="399.7" width="1.8" height="0.9" fill="#8c7b55"/>
<rect x="21.2" y="400.8" width="1.8" height="0.9" fill="#8c7b55"/>
<rect x="26.4" y="400.7" width="1.8" height="0.9" fill="#8c7b55"/>
<rect x="31.5" y="401.4" width="1.8" height="0.9" fill="#8c7b55"/>
<rect x="36.6" y="403.2" width="1.8" height="0.9" fill="#8c7b55"/>
<rect x="41.8" y="400.9" width="1.8" height="0.9" fill="#8c7b55"/>
<rect x="46.9" y="401.5" width="1.8" height="0.9" fill="#8c7b55"/>
<rect x="52.1" y="400.5" width="1.8" height="0.9" fill="#8c7b55"/>
<rect x="57.2" y="398.4" width="1.8" height="0.9" fill="#8c7b55"/>
<rect x="62.4" y="396.5" width="1.8" height="0.9" fill="#8c7b55"/>
<rect x="67.5" y="389.2" width="1.8" height="0.9" fill="#8c7b55"/>
<rect x="72.7" y="387.0" width="1.8" height="0.9" fill="#8c7b55"/>
<rect x="77.8" y="386.7" width="1.8" height="0.9" fill="#8c7b55"/>
<rect x="83.0" y="387.6" width="1.8" height="0.9" fill="#8c7b55"/>
<rect x="88.2" y="385.8" width="1.8" height="0.9" fill="#8c7b55"/>
<rect x="93.3" y="384.2" width="1.8" height="0.9" fill="#8c7b55"/>
<rect x="98.5" y="384.0" width="1.8" height="0.9" fill="#8c7b55"/>
<rect x="103.6" y="382.4" width="1.8" height="0.9" fill="#8c7b55"/>
<rect x="108.8" y="383.2" width="1.8" height="0.9" fill="#8c7b55"/>
<rect x="113.9" y="384.0" width="1.8" height="0.9" fill="#8c7b55"/>
<rect x="119.1" y="382.6" width="1.8" height="0.9" fill="#8c7b55"/>
<rect x="124.2" y="380.0" width="1.8" height="0.9" fill="#8c7b55"/>
<rect x="394.8" y="302.8" width="1.8" height="0.9" fill="#8c7b55"/>
<rect x="398.7" y="302.8" width="1.8" height="0.9" fill="#8c7b55"/></g>
<path d="M123.3 358.3 L146.7 352.5" stroke="#d0505a" stroke-width="0.9" stroke-opacity="0.8"/><polygon points="147.5,352.3 144.3,351.6 144.9,354.3" fill="#d0505a" fill-opacity="0.85"/>
<path d="M123.3 358.3 L112.5 349" stroke="#2fb552" stroke-width="1.1"/><polygon points="110.3,347 114.5,348 112,351" fill="#2fb552"/>
<path d="M123.3 358.3 V337" stroke="#2f8cf5" stroke-width="1.2"/><polygon points="123.3,333.5 125.2,338 121.4,338" fill="#2f8cf5"/>
<path d="M122.2 329 H124.4 L122.2 331.8 H124.4" stroke="#2f8cf5" stroke-width="0.5" fill="none"/></g>
<path fill-rule="evenodd" fill="#4b4e52" d="M404.4 225.3 a30.2 14.1 0 1 0 60.4 0 a30.2 14.1 0 1 0 -60.4 0 Z M411.2 224.6 a23.4 9.6 0 1 0 46.8 0 a23.4 9.6 0 1 0 -46.8 0 Z"/>
<path d="M427.5 207 L436.5 205 L438 213 L441.5 215 V225.5 L438.5 226.5 V223.6 L436 224.4 V227.6 L431.5 228.6 L427.5 225.6 Z" fill="#5c5d60" fill-opacity="0.95"/>
<g stroke="#8d8f92" stroke-width="0.5" stroke-opacity="0.75" fill="#8c8e91" fill-opacity="0.30" stroke-linejoin="round">
<path d="M419.9 205 L438.6 199.8 L448.9 208.5 L429.7 214.7 Z"/>
<path d="M419.9 205 L429.7 214.7 V231.8 L419.9 222.9 Z"/>
<path d="M429.7 214.7 L448.9 208.5 V226.3 L429.7 231.8 Z"/>
</g>
<path d="M438.6 199.8 V217.5 L419.9 222.9 M438.6 217.5 L448.9 226.3" stroke="#8d8f92" stroke-width="0.4" stroke-opacity="0.5" fill="none"/>
<rect x="-20.00" y="415.80" width="484.70" height="14.10" rx="2.5" fill="#212327" stroke="#33363b" stroke-width="0.7"/>
<text x="-14.60" y="425.19" font-size="5.2" font-weight="bold" fill="#dfe1e4"  textLength="18.80" lengthAdjust="spacingAndGlyphs" >MODEL</text>
<line x1="8.70" y1="418.80" x2="8.70" y2="427.00" stroke="#44474c" stroke-width="0.6" />
<g stroke="#cfd1d4" stroke-width="0.7" fill="none"><path d="M13.6 419.8 H19.9"/><path d="M13.6 421.8 H19.9"/><path d="M13.6 423.8 H19.9"/><path d="M13.6 425.8 H19.9"/><path d="M14.20 419.4 V426.2"/><path d="M16.75 419.4 V426.2"/><path d="M19.30 419.4 V426.2"/></g>
<text x="24.00" y="425.19" font-size="5.2" font-weight="bold" fill="#dfe1e4"  textLength="12.60" lengthAdjust="spacingAndGlyphs" >GRID</text>
<g stroke="#c9cbce" stroke-width="0.6" fill="none"><path d="M44.00 419.2 V426.4" stroke-dasharray="1.2 0.6"/><path d="M46.50 419.2 V426.4" stroke-dasharray="1.2 0.6"/><path d="M49.00 419.2 V426.4" stroke-dasharray="1.2 0.6"/></g><path d="M46.5 422 V426.4" stroke="#e03030" stroke-width="0.8"/>
<text x="52.10" y="425.19" font-size="5.2" font-weight="bold" fill="#dfe1e4"  textLength="15.80" lengthAdjust="spacingAndGlyphs" >SNAP</text>
<path d="M70.70 422.35 L72.00 423.65 L73.30 422.35" fill="none" stroke="#8a8d92" stroke-width="0.6" stroke-linecap="round" stroke-linejoin="round"/>
<line x1="77.80" y1="418.80" x2="77.80" y2="427.00" stroke="#44474c" stroke-width="0.6" />
<rect x="80.20" y="417.00" width="34.10" height="11.50" rx="1.8" fill="#283549" stroke="#3a6fc6" stroke-width="0.8"/>
<path d="M84.4 419.4 V426 H89" stroke="#d8dadd" stroke-width="0.7" fill="none"/><path d="M84.4 426 H89" stroke="#e03030" stroke-width="0.7"/><path d="M84.4 419.4 V426" stroke="#39b86a" stroke-width="0.7"/>
<text x="93.20" y="425.19" font-size="5.2" font-weight="bold" fill="#dfe1e4"  textLength="19.00" lengthAdjust="spacingAndGlyphs" >ORTHO</text>
<rect x="116.30" y="417.00" width="40.20" height="11.50" rx="1.8" fill="#283549" stroke="#3a6fc6" stroke-width="0.8"/>
<line x1="147.60" y1="417.40" x2="147.60" y2="428.10" stroke="#3a6fc6" stroke-width="0.6" />
<g stroke="#d8dadd" stroke-width="0.7" fill="none"><circle cx="122.6" cy="423.2" r="2.6"/><path d="M122.6 423.2 L125.6 419.4"/></g>
<text x="128.30" y="425.19" font-size="5.2" font-weight="bold" fill="#dfe1e4"  textLength="17.00" lengthAdjust="spacingAndGlyphs" >POLAR</text>
<path d="M150.70 422.35 L152.00 423.65 L153.30 422.35" fill="none" stroke="#aab0b8" stroke-width="0.6" stroke-linecap="round" stroke-linejoin="round"/>
<rect x="158.50" y="417.00" width="36.00" height="11.50" rx="1.8" fill="#283549" stroke="#3a6fc6" stroke-width="0.8"/>
<path d="M161.6 426 L168 419.6" stroke="#d8dadd" stroke-width="0.7"/><path d="M161.2 426.2 H167.4" stroke="#e03030" stroke-width="0.8"/>
<text x="170.80" y="425.19" font-size="5.2" font-weight="bold" fill="#dfe1e4"  textLength="21.40" lengthAdjust="spacingAndGlyphs" >STRACK</text>
<rect x="196.40" y="417.00" width="39.20" height="11.50" rx="1.8" fill="#283549" stroke="#3a6fc6" stroke-width="0.8"/>
<line x1="228.00" y1="417.40" x2="228.00" y2="428.10" stroke="#3a6fc6" stroke-width="0.6" />
<g stroke="#d8dadd" stroke-width="0.6" fill="none"><rect x="201.4" y="421.4" width="5" height="4.2"/><path d="M200 424 H201.4"/></g><circle cx="200.6" cy="420.2" r="1" fill="none" stroke="#e03030" stroke-width="0.6"/>
<text x="208.30" y="425.19" font-size="5.2" font-weight="bold" fill="#dfe1e4"  textLength="17.70" lengthAdjust="spacingAndGlyphs" >ESNAP</text>
<path d="M230.50 422.35 L231.80 423.65 L233.10 422.35" fill="none" stroke="#aab0b8" stroke-width="0.6" stroke-linecap="round" stroke-linejoin="round"/>
<line x1="238.00" y1="418.80" x2="238.00" y2="427.00" stroke="#44474c" stroke-width="0.6" />
<g stroke="#3f8cf0" stroke-width="0.8" fill="none" stroke-linecap="round"><path d="M246 419.4 V423.6 L242.6 426.6 M246 423.6 L249.4 426.6 M244.6 420.8 L246 419.2 L247.4 420.8"/></g>
<text x="253.30" y="425.19" font-size="5.2" font-weight="bold" fill="#dfe1e4"  textLength="7.70" lengthAdjust="spacingAndGlyphs" >1:1</text>
<path d="M264.70 422.35 L266.00 423.65 L267.30 422.35" fill="none" stroke="#d0d2d5" stroke-width="0.7" stroke-linecap="round" stroke-linejoin="round"/>
<line x1="272.40" y1="418.80" x2="272.40" y2="427.00" stroke="#44474c" stroke-width="0.6" />
<rect x="274.50" y="417.00" width="24.60" height="11.50" rx="1.8" fill="#283549" stroke="#3a6fc6" stroke-width="0.8"/>
<g stroke="#d8dadd" stroke-width="0.6" fill="none"><rect x="278.6" y="422.8" width="6" height="3"/><path d="M277.4 419.6 V422.2 M277.4 419.8 H280"/></g>
<text x="287.60" y="425.19" font-size="5.2" font-weight="bold" fill="#dfe1e4"  textLength="9.60" lengthAdjust="spacingAndGlyphs" >DIN</text>
<rect x="301.20" y="417.00" width="29.50" height="11.50" rx="1.8" fill="#283549" stroke="#3a6fc6" stroke-width="0.8"/>
<g stroke="#d8dadd" stroke-width="0.6" fill="none"><rect x="305.6" y="421.4" width="5.4" height="4.6"/><path d="M305.6 423 H311 M304.2 419.6 L305.6 421"/></g>
<text x="314.20" y="425.19" font-size="5.2" font-weight="bold" fill="#dfe1e4"  textLength="14.40" lengthAdjust="spacingAndGlyphs" >QUAD</text>
<g stroke="#c9cbce" stroke-width="0.6" fill="none"><path d="M337.2 424.6 A2.6 2.6 0 1 1 340.2 424.6 V426 H337.2 Z M337.6 427 H339.8"/></g>
<text x="342.90" y="425.19" font-size="5.2" font-weight="bold" fill="#dfe1e4"  textLength="37.10" lengthAdjust="spacingAndGlyphs" >HIDEOBJECTS</text>
<path d="M383.70 422.35 L385.00 423.65 L386.30 422.35" fill="none" stroke="#d0d2d5" stroke-width="0.7" stroke-linecap="round" stroke-linejoin="round"/>
<line x1="391.70" y1="418.80" x2="391.70" y2="427.00" stroke="#44474c" stroke-width="0.6" />
<g stroke="#d8dadd" stroke-width="0.65" fill="none"><rect x="396" y="419.4" width="7.6" height="7.2" rx="0.6"/><path d="M396 421.8 H403.6 M399.4 421.8 V426.6"/></g>
<text x="407.10" y="425.23" font-size="5.3" font-weight="normal" fill="#eeeff0"  textLength="20.30" lengthAdjust="spacingAndGlyphs" stroke="#eeeff0" stroke-width="0.15">Drafting</text>
<path d="M430.70 422.35 L432.00 423.65 L433.30 422.35" fill="none" stroke="#d0d2d5" stroke-width="0.7" stroke-linecap="round" stroke-linejoin="round"/>
<g stroke="#c9cbce" stroke-width="0.65" fill="none"><path d="M441 425.4 H446.4 L445.6 424.2 V422.2 A1.9 1.9 0 0 0 441.8 422.2 V424.2 Z M443 426.6 H444.4"/></g><circle cx="446.2" cy="420.2" r="1.1" fill="#f03a3a"/>
<g stroke="#d8dadd" stroke-width="0.65" fill="none"><path d="M452 420.6 H460.4 M452 425.2 H460.4"/><circle cx="457.6" cy="420.6" r="0.9" fill="#212327"/><circle cx="454.6" cy="425.2" r="0.9" fill="#212327"/></g>
</g>
<clipPath id="cSp"><rect x="479" y="190.7" width="134.9" height="300" rx="5"/></clipPath>
<g clip-path="url(#cSp)">
<rect x="479.00" y="190.70" width="135.00" height="300.00" rx="0" fill="#2d3034" />
<text x="485.10" y="204.30" font-size="5.0" font-weight="bold" fill="#dcdddf"  textLength="50.40" lengthAdjust="spacingAndGlyphs" >Interference Manager</text>
<g stroke="#a9acb0" stroke-width="0.6" fill="none" stroke-linejoin="round"><path d="M487 214.2 L490.2 211.2 L493.4 214.2 M487.8 213.6 V217 H492.6 V213.6 M489.4 217 V215 H491 V217"/></g>
<path d="M498.4 212.8 L499.8 214.3 L498.4 215.8" fill="none" stroke="#7d8085" stroke-width="0.55" />
<text x="504.80" y="216.76" font-size="4.9" font-weight="bold" fill="#f0f1f2"  textLength="29.90" lengthAdjust="spacingAndGlyphs" >Configuration</text>
<line x1="479.00" y1="222.90" x2="614.00" y2="222.90" stroke="#3b3e43" stroke-width="0.7" />
<text x="485.10" y="235.96" font-size="4.9" font-weight="bold" fill="#e4e5e7"  textLength="19.70" lengthAdjust="spacingAndGlyphs" >Selection</text>
<line x1="485.10" y1="238.40" x2="608.40" y2="238.40" stroke="#43464b" stroke-width="0.6" />
<text x="485.30" y="247.82" font-size="4.6" font-weight="bold" fill="#e4e5e7"  textLength="49.60" lengthAdjust="spacingAndGlyphs" >Search for interferences:</text>
<circle cx="488.2" cy="254.8" r="2.1" fill="#26282c" stroke="#aeb1b5" stroke-width="0.6"/>
<text x="493.20" y="256.92" font-size="4.6" font-weight="bold" fill="#e4e5e7"  textLength="49.40" lengthAdjust="spacingAndGlyphs" >Inside one set of entities</text>
<circle cx="547.4" cy="254.9" r="1.7" fill="none" stroke="#7d8085" stroke-width="0.45"/><path d="M547.4 254.0 V254.4 M547.4 254.9 V255.9" stroke="#7d8085" stroke-width="0.45"/>
<circle cx="488.2" cy="264.5" r="1.9" fill="#1d2535" stroke="#4a8ef5" stroke-width="1.3"/>
<text x="493.20" y="266.62" font-size="4.6" font-weight="bold" fill="#e4e5e7"  textLength="57.00" lengthAdjust="spacingAndGlyphs" >Between two sets of entities</text>
<circle cx="555" cy="264.6" r="1.7" fill="none" stroke="#7d8085" stroke-width="0.45"/><path d="M555 263.70000000000005 V264.1 M555 264.6 V265.6" stroke="#7d8085" stroke-width="0.45"/>
<rect x="485.30" y="274.20" width="123.30" height="62.80" rx="2" fill="none" stroke="#474a4f" stroke-width="0.6"/>
<text x="489.00" y="283.42" font-size="4.6" font-weight="bold" fill="#e4e5e7"  textLength="29.70" lengthAdjust="spacingAndGlyphs" >Selection set 1</text>
<text x="566.20" y="283.39" font-size="4.3" font-weight="bold" fill="#92959a" font-style="italic" textLength="37.80" lengthAdjust="spacingAndGlyphs" >29015 solids in set</text>
<circle cx="492.1" cy="291.7" r="2.1" fill="#26282c" stroke="#aeb1b5" stroke-width="0.6"/>
<text x="497.00" y="293.82" font-size="4.6" font-weight="bold" fill="#e4e5e7"  textLength="51.10" lengthAdjust="spacingAndGlyphs" >Select entities in drawing</text>
<rect x="550.70" y="288.20" width="10.10" height="9.60" rx="1.2" fill="#4b4e53" />
<g transform="translate(555.9 293.1)" fill="none" stroke="#eceded" stroke-width="0.55" stroke-linejoin="round"><path d="M-1.6 -2.6 L-1 2.2 L0.2 0.8 L1.6 2.8 M0.2 0.8 L2.2 0.6 Z"/><path d="M-2.8 -2.2 H-1.8 M-2.8 -2.2 V-1.2 M0.4 -2.2 H-0.4" stroke-width="0.4"/><path d="M1.6 1.4 L3 2.8 M3 1.4 L1.6 2.8" stroke-width="0.45"/></g>
<circle cx="492.1" cy="301.8" r="1.9" fill="#1d2535" stroke="#4a8ef5" stroke-width="1.3"/>
<text x="497.00" y="303.92" font-size="4.6" font-weight="bold" fill="#e4e5e7"  textLength="28.60" lengthAdjust="spacingAndGlyphs" >Entire drawing</text>
<circle cx="492.1" cy="312.5" r="2.1" fill="#26282c" stroke="#aeb1b5" stroke-width="0.6"/>
<text x="497.00" y="314.62" font-size="4.6" font-weight="bold" fill="#e4e5e7"  textLength="10.60" lengthAdjust="spacingAndGlyphs" >Filter</text>
<g stroke="#5d6065" stroke-width="0.55" fill="none"><path d="M582.8 310.2 H585.2 L586 311.2 H588.4 V314.59999999999997 H582.8 Z"/></g>
<path d="M590.70 312.65 L591.40 313.35 L592.10 312.65" fill="none" stroke="#5d6065" stroke-width="0.4" stroke-linecap="round" stroke-linejoin="round"/>
<g stroke="#5d6065" stroke-width="0.55" fill="none"><path d="M597.2 309.59999999999997 H602.4 V315.2 H597.2 Z M598.8 309.59999999999997 V315.2"/></g><path d="M602.6 312.0 L600.4 315.0" stroke="#8a6a35" stroke-width="0.8"/>
<rect x="497.10" y="319.60" width="107.60" height="13.40" rx="1" fill="#43464b" />
<circle cx="540.2" cy="326.3" r="2.2" fill="none" stroke="#4f6f9e" stroke-width="0.5"/><path d="M539 326.3 H541.4 M540.2 325.1 V327.5" stroke="#4f6f9e" stroke-width="0.5"/>
<text x="546.20" y="328.47" font-size="4.7" font-weight="normal" fill="#4f6f9e"  textLength="18.00" lengthAdjust="spacingAndGlyphs" >Add rule</text>
<rect x="485.30" y="339.60" width="123.30" height="55.40" rx="2" fill="none" stroke="#474a4f" stroke-width="0.6"/>
<text x="489.00" y="348.82" font-size="4.6" font-weight="bold" fill="#e4e5e7"  textLength="29.70" lengthAdjust="spacingAndGlyphs" >Selection set 2</text>
<text x="575.80" y="348.79" font-size="4.3" font-weight="bold" fill="#92959a" font-style="italic" textLength="28.20" lengthAdjust="spacingAndGlyphs" >0 solids in set</text>
<circle cx="492.1" cy="358.6" r="1.9" fill="#1d2535" stroke="#4a8ef5" stroke-width="1.3"/>
<text x="497.00" y="360.72" font-size="4.6" font-weight="bold" fill="#e4e5e7"  textLength="51.10" lengthAdjust="spacingAndGlyphs" >Select entities in drawing</text>
<rect x="550.70" y="353.80" width="10.10" height="9.60" rx="1.2" fill="#4b4e53" />
<g transform="translate(555.9 358.7)" fill="none" stroke="#eceded" stroke-width="0.55" stroke-linejoin="round"><path d="M-1.6 -2.6 L-1 2.2 L0.2 0.8 L1.6 2.8 M0.2 0.8 L2.2 0.6 Z"/><path d="M-2.8 -2.2 H-1.8 M-2.8 -2.2 V-1.2 M0.4 -2.2 H-0.4" stroke-width="0.4"/><path d="M1.6 1.4 L3 2.8 M3 1.4 L1.6 2.8" stroke-width="0.45"/></g>
<circle cx="492.1" cy="370.6" r="2.1" fill="#26282c" stroke="#aeb1b5" stroke-width="0.6"/>
<text x="497.00" y="372.72" font-size="4.6" font-weight="bold" fill="#e4e5e7"  textLength="10.60" lengthAdjust="spacingAndGlyphs" >Filter</text>
<g stroke="#5d6065" stroke-width="0.55" fill="none"><path d="M582.8 368.40000000000003 H585.2 L586 369.40000000000003 H588.4 V372.8 H582.8 Z"/></g>
<path d="M590.70 370.85 L591.40 371.55 L592.10 370.85" fill="none" stroke="#5d6065" stroke-width="0.4" stroke-linecap="round" stroke-linejoin="round"/>
<g stroke="#5d6065" stroke-width="0.55" fill="none"><path d="M597.2 367.8 H602.4 V373.40000000000003 H597.2 Z M598.8 367.8 V373.40000000000003"/></g><path d="M602.6 370.20000000000005 L600.4 373.20000000000005" stroke="#8a6a35" stroke-width="0.8"/>
<rect x="497.10" y="378.00" width="107.60" height="13.00" rx="1" fill="#43464b" />
<circle cx="540.2" cy="384.5" r="2.2" fill="none" stroke="#4f6f9e" stroke-width="0.5"/><path d="M539 384.5 H541.4 M540.2 383.3 V385.7" stroke="#4f6f9e" stroke-width="0.5"/>
<text x="546.20" y="386.67" font-size="4.7" font-weight="normal" fill="#4f6f9e"  textLength="18.00" lengthAdjust="spacingAndGlyphs" >Add rule</text>
<text x="485.10" y="426.56" font-size="4.9" font-weight="bold" fill="#e4e5e7"  textLength="18.20" lengthAdjust="spacingAndGlyphs" >Settings</text>
<line x1="485.10" y1="429.30" x2="608.40" y2="429.30" stroke="#43464b" stroke-width="0.6" />
<rect x="485.60" y="434.40" width="8.20" height="4.60" rx="2.3" fill="#1f2124" stroke="#c9cbce" stroke-width="0.5"/>
<circle cx="488" cy="436.7" r="1.6" fill="#e8e9ea"/>
<text x="496.40" y="438.62" font-size="4.6" font-weight="bold" fill="#e4e5e7"  textLength="59.80" lengthAdjust="spacingAndGlyphs" >Calculate interference volume</text>
</g>
</svg>
</body></html>
